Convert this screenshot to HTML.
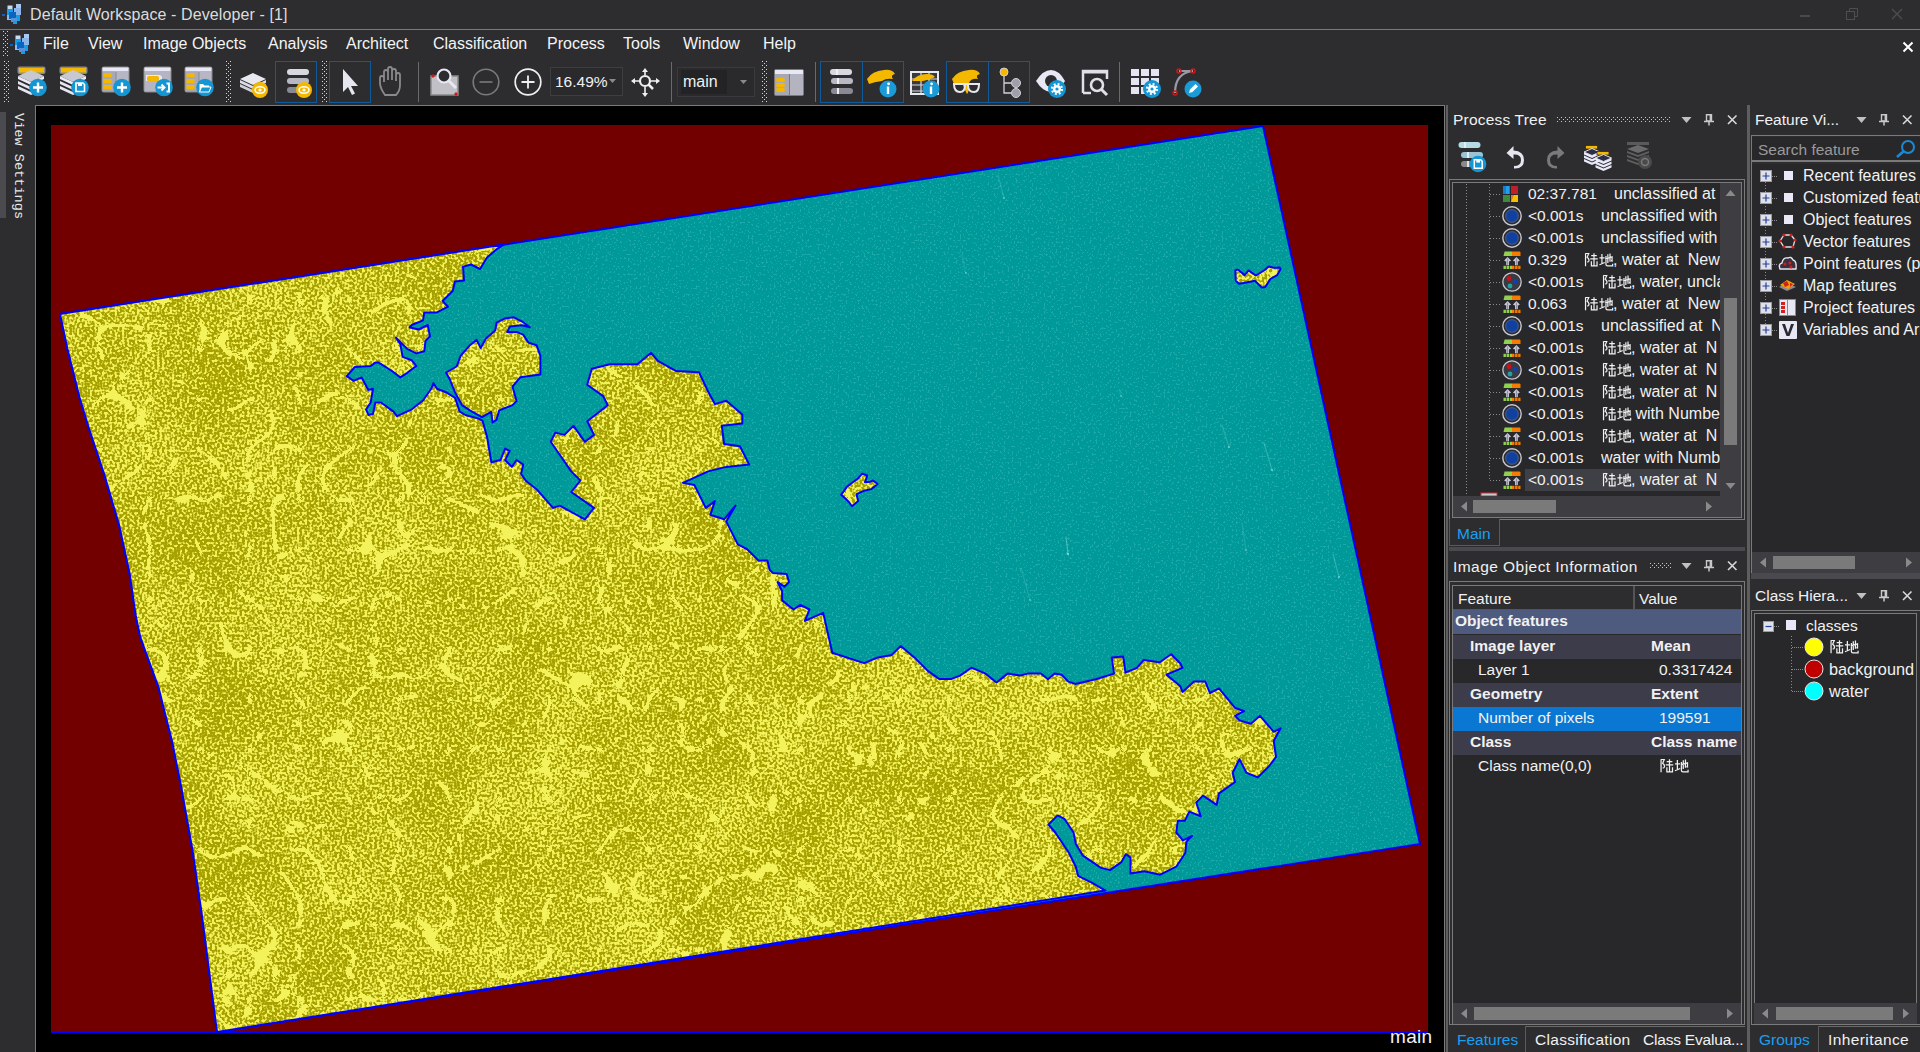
<!DOCTYPE html><html><head><meta charset='utf-8'><style>
*{margin:0;padding:0;box-sizing:border-box}
html,body{width:1920px;height:1052px;overflow:hidden;background:#2d2d30;font-family:"Liberation Sans", sans-serif;color:#f1f1f1;font-size:15px}
.a{position:absolute}
.t{position:absolute;white-space:pre;line-height:1}
.ln{position:absolute;background:#6b6b6b}
.b{font-weight:bold}
</style></head><body>
<svg class='a' style='left:2px;top:3px' width='20' height='22' viewBox='0 0 20 22'><rect x='0' y='11' width='3' height='2' fill='#1060c0'/><rect x='5.5' y='2.5' width='5' height='4' fill='#c8dcf4'/><rect x='14' y='1' width='5' height='4' fill='#a8c8f0'/><rect x='12' y='5' width='7' height='7' fill='#8cb4e8'/><rect x='5' y='6' width='6' height='6' fill='#10a0e8'/><rect x='5' y='12' width='6' height='5' fill='#90b8ec'/><rect x='13' y='12' width='5' height='6' fill='#10a0e8'/><rect x='7' y='9' width='7' height='7' fill='#0a64c0'/><rect x='9' y='15' width='6' height='4' fill='#5a90d8'/><rect x='11' y='18' width='4' height='3' fill='#10a0e8'/></svg>
<div class='t' style='left:30px;top:7px;font-size:16px;color:#dcdcdc;letter-spacing:0.1px'>Default Workspace - Developer - [1]</div>
<div class='ln' style='left:0;top:29px;width:1920px;height:1px;background:#7a7a7a'></div>
<div class='a' style='left:1800px;top:15px;width:10px;height:2px;background:#4a4a4a'></div>
<svg class='a' style='left:1845px;top:7px' width='14' height='14' viewBox='0 0 14 14'><rect x='1.5' y='4.5' width='8' height='8' fill='none' stroke='#4e4e4e'/><path d='M4.5 4.5V1.5H12.5V9.5H9.5' fill='none' stroke='#4e4e4e'/></svg>
<svg class='a' style='left:1890px;top:7px' width='14' height='14' viewBox='0 0 14 14'><path d='M2 2L12 12M12 2L2 12' stroke='#4e4e4e' stroke-width='1.3'/></svg>
<svg class='a' style='left:3px;top:31px' width='5' height='25' viewBox='0 0 5 25'><g fill='#d8d8d8'><rect x='0' y='0' width='1' height='1'/><rect x='4' y='0' width='1' height='1'/><rect x='2' y='2' width='1' height='1'/><rect x='0' y='4' width='1' height='1'/><rect x='4' y='4' width='1' height='1'/><rect x='2' y='6' width='1' height='1'/><rect x='0' y='8' width='1' height='1'/><rect x='4' y='8' width='1' height='1'/><rect x='2' y='10' width='1' height='1'/><rect x='0' y='12' width='1' height='1'/><rect x='4' y='12' width='1' height='1'/><rect x='2' y='14' width='1' height='1'/><rect x='0' y='16' width='1' height='1'/><rect x='4' y='16' width='1' height='1'/><rect x='2' y='18' width='1' height='1'/><rect x='0' y='20' width='1' height='1'/><rect x='4' y='20' width='1' height='1'/><rect x='2' y='22' width='1' height='1'/><rect x='0' y='24' width='1' height='1'/><rect x='4' y='24' width='1' height='1'/></g></svg>
<svg class='a' style='left:10px;top:33px' width='22' height='22' viewBox='0 0 22 22'><rect x='0' y='11' width='3' height='2' fill='#1060c0'/><rect x='5.5' y='2.5' width='5' height='4' fill='#c8dcf4'/><rect x='14' y='1' width='5' height='4' fill='#a8c8f0'/><rect x='12' y='5' width='7' height='7' fill='#8cb4e8'/><rect x='5' y='6' width='6' height='6' fill='#10a0e8'/><rect x='5' y='12' width='6' height='5' fill='#90b8ec'/><rect x='13' y='12' width='5' height='6' fill='#10a0e8'/><rect x='7' y='9' width='7' height='7' fill='#0a64c0'/><rect x='9' y='15' width='6' height='4' fill='#5a90d8'/><rect x='11' y='18' width='4' height='3' fill='#10a0e8'/></svg>
<div class='t' style='left:43px;top:36px;font-size:16px;color:#f4f4f4'>File</div>
<div class='t' style='left:88px;top:36px;font-size:16px;color:#f4f4f4'>View</div>
<div class='t' style='left:143px;top:36px;font-size:16px;color:#f4f4f4'>Image Objects</div>
<div class='t' style='left:268px;top:36px;font-size:16px;color:#f4f4f4'>Analysis</div>
<div class='t' style='left:346px;top:36px;font-size:16px;color:#f4f4f4'>Architect</div>
<div class='t' style='left:433px;top:36px;font-size:16px;color:#f4f4f4'>Classification</div>
<div class='t' style='left:547px;top:36px;font-size:16px;color:#f4f4f4'>Process</div>
<div class='t' style='left:623px;top:36px;font-size:16px;color:#f4f4f4'>Tools</div>
<div class='t' style='left:683px;top:36px;font-size:16px;color:#f4f4f4'>Window</div>
<div class='t' style='left:763px;top:36px;font-size:16px;color:#f4f4f4'>Help</div>
<svg class='a' style='left:1902px;top:41px' width='12' height='12' viewBox='0 0 12 12'><path d='M1.5 1.5L10.5 10.5M10.5 1.5L1.5 10.5' stroke='#fff' stroke-width='2'/></svg>
<svg class='a' style='left:4px;top:61px' width='5' height='41' viewBox='0 0 5 41'><g fill='#d8d8d8'><rect x='0' y='0' width='1' height='1'/><rect x='4' y='0' width='1' height='1'/><rect x='2' y='2' width='1' height='1'/><rect x='0' y='4' width='1' height='1'/><rect x='4' y='4' width='1' height='1'/><rect x='2' y='6' width='1' height='1'/><rect x='0' y='8' width='1' height='1'/><rect x='4' y='8' width='1' height='1'/><rect x='2' y='10' width='1' height='1'/><rect x='0' y='12' width='1' height='1'/><rect x='4' y='12' width='1' height='1'/><rect x='2' y='14' width='1' height='1'/><rect x='0' y='16' width='1' height='1'/><rect x='4' y='16' width='1' height='1'/><rect x='2' y='18' width='1' height='1'/><rect x='0' y='20' width='1' height='1'/><rect x='4' y='20' width='1' height='1'/><rect x='2' y='22' width='1' height='1'/><rect x='0' y='24' width='1' height='1'/><rect x='4' y='24' width='1' height='1'/><rect x='2' y='26' width='1' height='1'/><rect x='0' y='28' width='1' height='1'/><rect x='4' y='28' width='1' height='1'/><rect x='2' y='30' width='1' height='1'/><rect x='0' y='32' width='1' height='1'/><rect x='4' y='32' width='1' height='1'/><rect x='2' y='34' width='1' height='1'/><rect x='0' y='36' width='1' height='1'/><rect x='4' y='36' width='1' height='1'/><rect x='2' y='38' width='1' height='1'/><rect x='0' y='40' width='1' height='1'/><rect x='4' y='40' width='1' height='1'/></g></svg>
<svg class='a' style='left:17px;top:66px' width='32' height='32' viewBox='0 0 32 32'><rect x='0.5' y='0.5' width='28' height='7.5' rx='2' fill='#8a8a8a'/><rect x='2' y='2' width='25' height='4.5' fill='#f5b800'/><path d='M1 20V23L14 29L27 23V20L14 26Z' fill='#e6e6f2'/><path d='M1 15V18L14 24L27 18V15L14 21Z' fill='#e6e6f2'/><path d='M1 10V13L14 19L27 13V10L14 16Z' fill='#ececf6'/><path d='M1 10L14 4L27 10L14 16Z' fill='#c8c8d2'/><circle cx='21' cy='21.5' r='8.8' fill='#1496d4'/><path d='M21 16.5V26.5M16 21.5H26' stroke='#fff' stroke-width='2.4'/></svg>
<svg class='a' style='left:59px;top:66px' width='32' height='32' viewBox='0 0 32 32'><rect x='0.5' y='0.5' width='28' height='7.5' rx='2' fill='#8a8a8a'/><rect x='2' y='2' width='25' height='4.5' fill='#f5b800'/><path d='M1 20V23L14 29L27 23V20L14 26Z' fill='#e6e6f2'/><path d='M1 15V18L14 24L27 18V15L14 21Z' fill='#e6e6f2'/><path d='M1 10V13L14 19L27 13V10L14 16Z' fill='#ececf6'/><path d='M1 10L14 4L27 10L14 16Z' fill='#c8c8d2'/><circle cx='21' cy='21.5' r='8.8' fill='#1496d4'/><path d='M17 17H24L25.5 18.5V25.5H17Z' fill='none' stroke='#fff' stroke-width='1.6'/><rect x='19' y='17' width='4' height='3' fill='#fff'/></svg>
<svg class='a' style='left:101px;top:66px' width='32' height='32' viewBox='0 0 32 32'><rect x='0.5' y='0.5' width='28' height='26' rx='2.5' fill='#8a8a8a'/><rect x='1.5' y='1.5' width='26' height='4' fill='#e8e8f6'/><rect x='1.5' y='5.5' width='13' height='20' fill='#a8a8b6'/><rect x='15.5' y='5.5' width='12' height='20' fill='#b6b6c4'/><rect x='2.5' y='7' width='8' height='4' fill='#f5b800'/><rect x='2.5' y='13' width='8' height='4' fill='#f5b800'/><rect x='2.5' y='19' width='8' height='4' fill='#f5b800'/><circle cx='21' cy='21.5' r='8.8' fill='#1496d4'/><path d='M21 16.5V26.5M16 21.5H26' stroke='#fff' stroke-width='2.4'/></svg>
<svg class='a' style='left:143px;top:66px' width='32' height='32' viewBox='0 0 32 32'><rect x='0.5' y='0.5' width='28' height='26' rx='2.5' fill='#8a8a8a'/><rect x='1.5' y='1.5' width='26' height='4' fill='#e8e8f6'/><rect x='1.5' y='5.5' width='26' height='20' fill='#b4b4c2'/><path d='M3 9H16Q19 9 19 12V15H3Z' fill='#e8e8f6'/><rect x='4' y='10' width='12' height='5' rx='1.5' fill='#f5b800'/><circle cx='21' cy='21.5' r='8.8' fill='#1496d4'/><path d='M14.5 21.5H21M18.5 18.5L21.5 21.5L18.5 24.5M23.5 17.5H26V25.5H23.5' fill='none' stroke='#fff' stroke-width='1.9'/></svg>
<svg class='a' style='left:184px;top:66px' width='32' height='32' viewBox='0 0 32 32'><rect x='0.5' y='0.5' width='28' height='26' rx='2.5' fill='#8a8a8a'/><rect x='1.5' y='1.5' width='26' height='4' fill='#e8e8f6'/><rect x='1.5' y='5.5' width='13' height='20' fill='#a8a8b6'/><rect x='15.5' y='5.5' width='12' height='20' fill='#b6b6c4'/><rect x='2.5' y='7' width='8' height='4' fill='#f5b800'/><rect x='2.5' y='13' width='8' height='4' fill='#f5b800'/><rect x='2.5' y='19' width='8' height='4' fill='#f5b800'/><circle cx='21' cy='21.5' r='8.8' fill='#1496d4'/><path d='M15.5 18H19L20.5 19.5H25V26H15.5Z' fill='#fff'/><path d='M15.5 26L17.5 21H27L25 26Z' fill='#1496d4' stroke='#fff' stroke-width='1'/></svg>
<svg class='a' style='left:226px;top:61px' width='5' height='41' viewBox='0 0 5 41'><g fill='#d8d8d8'><rect x='0' y='0' width='1' height='1'/><rect x='4' y='0' width='1' height='1'/><rect x='2' y='2' width='1' height='1'/><rect x='0' y='4' width='1' height='1'/><rect x='4' y='4' width='1' height='1'/><rect x='2' y='6' width='1' height='1'/><rect x='0' y='8' width='1' height='1'/><rect x='4' y='8' width='1' height='1'/><rect x='2' y='10' width='1' height='1'/><rect x='0' y='12' width='1' height='1'/><rect x='4' y='12' width='1' height='1'/><rect x='2' y='14' width='1' height='1'/><rect x='0' y='16' width='1' height='1'/><rect x='4' y='16' width='1' height='1'/><rect x='2' y='18' width='1' height='1'/><rect x='0' y='20' width='1' height='1'/><rect x='4' y='20' width='1' height='1'/><rect x='2' y='22' width='1' height='1'/><rect x='0' y='24' width='1' height='1'/><rect x='4' y='24' width='1' height='1'/><rect x='2' y='26' width='1' height='1'/><rect x='0' y='28' width='1' height='1'/><rect x='4' y='28' width='1' height='1'/><rect x='2' y='30' width='1' height='1'/><rect x='0' y='32' width='1' height='1'/><rect x='4' y='32' width='1' height='1'/><rect x='2' y='34' width='1' height='1'/><rect x='0' y='36' width='1' height='1'/><rect x='4' y='36' width='1' height='1'/><rect x='2' y='38' width='1' height='1'/><rect x='0' y='40' width='1' height='1'/><rect x='4' y='40' width='1' height='1'/></g></svg>
<svg class='a' style='left:238px;top:67px' width='32' height='34' viewBox='0 0 32 34'><path d='M2 12L15 6L28 12L15 18Z' fill='#e8e8f0'/><path d='M2 16L15 22L28 16V13L15 19L2 13Z' fill='#dcdce6'/><path d='M2 20L15 26L28 20V17L15 23L2 17Z' fill='#cfcfd8'/><circle cx='22' cy='23' r='8' fill='#f5b800'/><ellipse cx='22' cy='23' rx='5' ry='3.2' fill='none' stroke='#fff' stroke-width='1.5'/><circle cx='22' cy='23' r='1.6' fill='#fff'/></svg>
<div class='a' style='left:275px;top:61px;width:42px;height:42px;border:1px solid #0e5a9a'></div>
<svg class='a' style='left:281px;top:67px' width='32' height='34' viewBox='0 0 32 34'><rect x='6' y='2' width='22' height='6' rx='3' fill='#d8d8e0'/><rect x='6' y='11' width='22' height='6' rx='3' fill='#b8b8c4'/><rect x='6' y='20' width='22' height='6' rx='3' fill='#8a8a96'/><circle cx='23' cy='23' r='8' fill='#f5b800'/><ellipse cx='23' cy='23' rx='5' ry='3.2' fill='none' stroke='#fff' stroke-width='1.5'/><circle cx='23' cy='23' r='1.6' fill='#fff'/></svg>
<svg class='a' style='left:322px;top:61px' width='5' height='41' viewBox='0 0 5 41'><g fill='#d8d8d8'><rect x='0' y='0' width='1' height='1'/><rect x='4' y='0' width='1' height='1'/><rect x='2' y='2' width='1' height='1'/><rect x='0' y='4' width='1' height='1'/><rect x='4' y='4' width='1' height='1'/><rect x='2' y='6' width='1' height='1'/><rect x='0' y='8' width='1' height='1'/><rect x='4' y='8' width='1' height='1'/><rect x='2' y='10' width='1' height='1'/><rect x='0' y='12' width='1' height='1'/><rect x='4' y='12' width='1' height='1'/><rect x='2' y='14' width='1' height='1'/><rect x='0' y='16' width='1' height='1'/><rect x='4' y='16' width='1' height='1'/><rect x='2' y='18' width='1' height='1'/><rect x='0' y='20' width='1' height='1'/><rect x='4' y='20' width='1' height='1'/><rect x='2' y='22' width='1' height='1'/><rect x='0' y='24' width='1' height='1'/><rect x='4' y='24' width='1' height='1'/><rect x='2' y='26' width='1' height='1'/><rect x='0' y='28' width='1' height='1'/><rect x='4' y='28' width='1' height='1'/><rect x='2' y='30' width='1' height='1'/><rect x='0' y='32' width='1' height='1'/><rect x='4' y='32' width='1' height='1'/><rect x='2' y='34' width='1' height='1'/><rect x='0' y='36' width='1' height='1'/><rect x='4' y='36' width='1' height='1'/><rect x='2' y='38' width='1' height='1'/><rect x='0' y='40' width='1' height='1'/><rect x='4' y='40' width='1' height='1'/></g></svg>
<div class='a' style='left:329px;top:61px;width:42px;height:42px;border:1px solid #0e5a9a'></div>
<svg class='a' style='left:338px;top:67px' width='24' height='30' viewBox='0 0 24 30'><path d='M5 2V25L10 20L14 28L17 26.5L13 19H20Z' fill='#e6e6f0'/></svg>
<svg class='a' style='left:376px;top:66px' width='30' height='32' viewBox='0 0 30 32'><path d='M9 29Q4 22 4 17V12Q4 10 6 10Q8 10 8 12V16V6Q8 4 10 4Q12 4 12 6V14V3Q12 1 14 1Q16 1 16 3V14V5Q16 3 18 3Q20 3 20 5V15V9Q20 7 22 7Q24 7 24 9V19Q24 25 20 29Z' fill='none' stroke='#8a8a8a' stroke-width='1.8'/></svg>
<div class='a' style='left:418px;top:62px;width:1px;height:40px;background:#6a6a6a'></div>
<svg class='a' style='left:429px;top:67px' width='32' height='30' viewBox='0 0 32 30'><rect x='2' y='9' width='27' height='19' fill='#c0c0c6' stroke='#8a8a8a' stroke-width='1.5'/><circle cx='15' cy='9' r='6.5' fill='#2d2d30' stroke='#e8e8f0' stroke-width='2.2'/><path d='M19.5 13.5L27 21' stroke='#e8e8f0' stroke-width='3'/><path d='M2 9l2-2 2 2-2 2zM25 27l2-2 2 2-2 2z' fill='#d01818'/></svg>
<svg class='a' style='left:471px;top:67px' width='30' height='30' viewBox='0 0 30 30'><circle cx='15' cy='15' r='12.8' fill='none' stroke='#7a7a7a' stroke-width='1.6'/><path d='M8.5 15H21.5' stroke='#7a7a7a' stroke-width='1.6'/></svg>
<svg class='a' style='left:513px;top:67px' width='30' height='30' viewBox='0 0 30 30'><circle cx='15' cy='15' r='12.8' fill='none' stroke='#f0f0f0' stroke-width='1.7'/><path d='M8.5 15H21.5M15 8.5V21.5' stroke='#f0f0f0' stroke-width='1.8'/></svg>
<div class='a' style='left:550px;top:67px;width:73px;height:29px;border:1px solid #3e3e42;background:#2a2a2d'></div>
<div class='t' style='left:555px;top:74px;font-size:15.5px;color:#f1f1f1'>16.49<span style='letter-spacing:-1px'>%</span></div>
<svg class='a' style='left:608px;top:78px' width='9' height='6' viewBox='0 0 9 6'><path d='M1 1H8L4.5 5Z' fill='#8a8a8a'/></svg>
<svg class='a' style='left:630px;top:67px' width='31' height='31' viewBox='0 0 31 31'><circle cx='15' cy='14' r='5' fill='none' stroke='#f0f0f0' stroke-width='2.2'/><path d='M18.5 17.5L23 22' stroke='#f0f0f0' stroke-width='2.5'/><path d='M15 1L12 5H18ZM15 30L12 26H18ZM1 14L5 11V17ZM30 14L26 11V17Z' fill='#f0f0f0'/><path d='M15 4V8M15 20V26M4 14H9M21 14H27' stroke='#f0f0f0' stroke-width='1.6'/></svg>
<div class='a' style='left:671px;top:62px;width:1px;height:40px;background:#6a6a6a'></div>
<div class='a' style='left:677px;top:67px;width:78px;height:30px;border:1px solid #3a3a3e;background:#2a2a2d'></div>
<div class='a' style='left:681px;top:70px;width:46px;height:24px;background:#232325'></div>
<div class='t' style='left:683px;top:74px;font-size:16px;color:#f1f1f1'>main</div>
<svg class='a' style='left:739px;top:79px' width='9' height='6' viewBox='0 0 9 6'><path d='M1 1H8L4.5 5Z' fill='#8a8a8a'/></svg>
<svg class='a' style='left:762px;top:61px' width='5' height='41' viewBox='0 0 5 41'><g fill='#d8d8d8'><rect x='0' y='0' width='1' height='1'/><rect x='4' y='0' width='1' height='1'/><rect x='2' y='2' width='1' height='1'/><rect x='0' y='4' width='1' height='1'/><rect x='4' y='4' width='1' height='1'/><rect x='2' y='6' width='1' height='1'/><rect x='0' y='8' width='1' height='1'/><rect x='4' y='8' width='1' height='1'/><rect x='2' y='10' width='1' height='1'/><rect x='0' y='12' width='1' height='1'/><rect x='4' y='12' width='1' height='1'/><rect x='2' y='14' width='1' height='1'/><rect x='0' y='16' width='1' height='1'/><rect x='4' y='16' width='1' height='1'/><rect x='2' y='18' width='1' height='1'/><rect x='0' y='20' width='1' height='1'/><rect x='4' y='20' width='1' height='1'/><rect x='2' y='22' width='1' height='1'/><rect x='0' y='24' width='1' height='1'/><rect x='4' y='24' width='1' height='1'/><rect x='2' y='26' width='1' height='1'/><rect x='0' y='28' width='1' height='1'/><rect x='4' y='28' width='1' height='1'/><rect x='2' y='30' width='1' height='1'/><rect x='0' y='32' width='1' height='1'/><rect x='4' y='32' width='1' height='1'/><rect x='2' y='34' width='1' height='1'/><rect x='0' y='36' width='1' height='1'/><rect x='4' y='36' width='1' height='1'/><rect x='2' y='38' width='1' height='1'/><rect x='0' y='40' width='1' height='1'/><rect x='4' y='40' width='1' height='1'/></g></svg>
<svg class='a' style='left:773px;top:67px' width='32' height='30' viewBox='0 0 32 30'><rect x='1' y='2' width='30' height='27' rx='2' fill='#7a7a7a'/><rect x='2' y='3' width='28' height='4' fill='#e8e8f4'/><rect x='2' y='7' width='14' height='21' fill='#a8a8b4'/><rect x='17' y='7' width='13' height='21' fill='#b4b4c0'/><rect x='3' y='11' width='9' height='4' rx='2' fill='#f5b800'/><rect x='3' y='16' width='9' height='4' rx='2' fill='#f5b800'/><rect x='3' y='21' width='9' height='4' rx='2' fill='#f5b800'/></svg>
<div class='a' style='left:815px;top:62px;width:1px;height:40px;background:#6a6a6a'></div>
<div class='a' style='left:820px;top:61px;width:84px;height:42px;border:1px solid #0e5a9a'></div><div class='a' style='left:862px;top:61px;width:1px;height:42px;background:#0e5a9a'></div>
<svg class='a' style='left:825px;top:67px' width='30' height='30' viewBox='0 0 30 30'><rect x='5' y='2' width='22' height='6' rx='3' fill='#d8d8e0'/><rect x='6' y='11' width='22' height='6' rx='3' fill='#b8b8c4'/><rect x='6' y='21' width='22' height='6' rx='3' fill='#8a8a96'/><rect x='11' y='2' width='2' height='6' fill='#f0f0f0'/><rect x='12' y='11' width='2' height='6' fill='#f0f0f0'/><rect x='12' y='21' width='2' height='6' fill='#f0f0f0'/></svg>
<svg class='a' style='left:866px;top:67px' width='32' height='32' viewBox='0 0 32 32'><path d='M1 12Q6 4 18 3Q26 2 29 7Q24 8 27 12Q20 11 16 14Q8 15 3 17Z' fill='#f5b800'/><circle cx='22' cy='22' r='8.5' fill='#1a9ad6'/><path d='M22 19.5V27' stroke='#fff' stroke-width='2.4'/><circle cx='22.6' cy='16.8' r='1.4' fill='#fff'/></svg>
<svg class='a' style='left:909px;top:67px' width='32' height='32' viewBox='0 0 32 32'><rect x='1' y='4' width='29' height='24' fill='#e8e8f0'/><rect x='3' y='6' width='25' height='20' fill='#3a3a3e'/><path d='M3 12H28M3 18H28M3 24H28M12 6V26M20 6V26' stroke='#d8d8e0' stroke-width='1.2'/><path d='M3 14Q8 7 18 7Q24 7 26 10Q22 12 14 14Z' fill='#f5b800'/><circle cx='22' cy='22' r='8.5' fill='#1a9ad6'/><path d='M22 19.5V27' stroke='#fff' stroke-width='2.4'/><circle cx='22.6' cy='16.8' r='1.4' fill='#fff'/></svg>
<div class='a' style='left:946px;top:61px;width:84px;height:42px;border:1px solid #0e5a9a'></div><div class='a' style='left:988px;top:61px;width:1px;height:42px;background:#0e5a9a'></div>
<svg class='a' style='left:951px;top:67px' width='32' height='32' viewBox='0 0 32 32'><path d='M1 12Q6 4 18 3Q26 2 29 7Q24 8 27 12Q20 11 18 16Q18 26 16 27Q13 22 12 18Q6 17 3 17Z' fill='#f5b800'/><path d='M2 17H29M3 17Q3 25 9 25Q14 25 14 18M17 18Q17 25 23 25Q28 25 28 17' fill='none' stroke='#e8e8f0' stroke-width='2'/></svg>
<svg class='a' style='left:996px;top:67px' width='28' height='32' viewBox='0 0 28 32'><circle cx='8' cy='5' r='4' fill='#f5b800' stroke='#d0d0d8' stroke-width='1'/><circle cx='20' cy='16' r='4.5' fill='#a0a0aa' stroke='#d0d0d8' stroke-width='1'/><circle cx='20' cy='26' r='4.5' fill='#a0a0aa' stroke='#d0d0d8' stroke-width='1'/><path d='M8 9V26H15.5M8 16H15.5' fill='none' stroke='#d0d0d8' stroke-width='1.3'/></svg>
<svg class='a' style='left:1035px;top:67px' width='32' height='32' viewBox='0 0 32 32'><path d='M1 14Q8 3 16 3Q24 3 30 14Q24 25 16 25Q8 25 1 14Z' fill='#e8e8f4'/><circle cx='16' cy='14' r='6' fill='#2d2d30'/><circle cx='22' cy='22' r='9' fill='#1496d4'/><circle cx='22' cy='22' r='4' fill='#fff'/><circle cx='22' cy='22' r='5' fill='none' stroke='#fff' stroke-width='2.2' stroke-dasharray='1.9 2.03'/><circle cx='22' cy='22' r='1.6' fill='#1496d4'/></svg>
<svg class='a' style='left:1080px;top:67px' width='30' height='30' viewBox='0 0 30 30'><path d='M3 26V4H27V12' fill='none' stroke='#e0e0e8' stroke-width='2.5'/><path d='M3 5H27' stroke='#e0e0e8' stroke-width='3'/><path d='M3 26H11' stroke='#e0e0e8' stroke-width='2.5'/><circle cx='17' cy='18' r='6' fill='none' stroke='#e0e0e8' stroke-width='2.6'/><path d='M21.5 22.5L27 28' stroke='#e0e0e8' stroke-width='3'/></svg>
<div class='a' style='left:1119px;top:62px;width:1px;height:40px;background:#6a6a6a'></div>
<svg class='a' style='left:1130px;top:67px' width='32' height='32' viewBox='0 0 32 32'><g fill='#e4e4f2'><rect x='1' y='2' width='8' height='7'/><rect x='11' y='2' width='8' height='7'/><rect x='21' y='2' width='8' height='7'/><rect x='1' y='11' width='8' height='7'/><rect x='11' y='11' width='8' height='7'/><rect x='21' y='11' width='8' height='7'/><rect x='1' y='20' width='8' height='7'/><rect x='11' y='20' width='8' height='7'/></g><circle cx='22' cy='22' r='9' fill='#1496d4'/><circle cx='22' cy='22' r='4' fill='#fff'/><circle cx='22' cy='22' r='5' fill='none' stroke='#fff' stroke-width='2.2' stroke-dasharray='1.9 2.03'/><circle cx='22' cy='22' r='1.6' fill='#1496d4'/></svg>
<svg class='a' style='left:1171px;top:67px' width='32' height='32' viewBox='0 0 32 32'><path d='M4 26Q4 6 22 4' fill='none' stroke='#9a9aa6' stroke-width='2.2'/><path d='M8 4H22' stroke='#9a9aa6' stroke-width='2'/><g fill='none' stroke='#d01818' stroke-width='1.5'><circle cx='4' cy='26' r='2'/><circle cx='8' cy='4' r='2'/><circle cx='22' cy='4' r='2'/></g><circle cx='22' cy='22' r='8.5' fill='#1a9ad6'/><path d='M18 26L19 22.5L24.5 17L27 19.5L21.5 25Z' fill='#fff'/></svg>
<div class='a' style='left:35px;top:105px;width:1410px;height:947px;background:#000;border-left:1px solid #7a7a7a;border-top:1px solid #7a7a7a;border-right:1px solid #7a7a7a'></div>
<svg class='a' style='left:0;top:0' width='1450' height='1052' viewBox='0 0 1450 1052'><rect x='51' y='125' width='1377' height='907' fill='#720000'/><line x1='51' y1='1032.5' x2='1428' y2='1032.5' stroke='#0000ff' stroke-width='1.3'/><defs><clipPath id='qc'><polygon points='60.0,314.0 1263.0,126.0 1420.0,844.0 217.0,1032.0 202.0,915.8 192.8,852.0 181.4,788.0 172.3,742.5 158.6,687.7 140.4,637.6 135.8,616.3 129.7,573.8 119.1,525.1 103.9,473.4 88.7,427.8 79.5,397.3 67.4,348.7'/></clipPath><filter id='wx' x='0' y='0' width='100%' height='100%' color-interpolation-filters='sRGB'><feTurbulence type='fractalNoise' baseFrequency='0.5' numOctaves='1' seed='21' result='f'/><feColorMatrix in='f' type='matrix' values='0 0 0 0 0  0 0 0 0 0  0 0 0 0 0  14 0 0 0 -8.3' result='m'/><feFlood flood-color='#1ea9a9'/><feComposite in2='m' operator='in'/></filter></defs><polygon points='60.0,314.0 1263.0,126.0 1420.0,844.0 217.0,1032.0 202.0,915.8 192.8,852.0 181.4,788.0 172.3,742.5 158.6,687.7 140.4,637.6 135.8,616.3 129.7,573.8 119.1,525.1 103.9,473.4 88.7,427.8 79.5,397.3 67.4,348.7' fill='#009999'/><rect x='51' y='125' width='1377' height='907' clip-path='url(#qc)' filter='url(#wx)'/><polygon points='60.0,314.0 1263.0,126.0 1420.0,844.0 217.0,1032.0 202.0,915.8 192.8,852.0 181.4,788.0 172.3,742.5 158.6,687.7 140.4,637.6 135.8,616.3 129.7,573.8 119.1,525.1 103.9,473.4 88.7,427.8 79.5,397.3 67.4,348.7' fill='none' stroke='#0000ff' stroke-width='2'/><defs><clipPath id='lc'><polygon points='60.0,314.0 503.7,244.6 496.0,249.7 487.0,257.6 480.0,269.0 471.0,264.5 463.0,266.8 464.0,280.4 455.0,281.6 452.8,290.7 442.6,301.0 448.0,306.7 436.9,312.4 424.3,312.4 423.0,320.4 411.8,325.0 409.5,327.2 418.6,329.5 427.7,325.0 430.0,336.3 425.5,340.9 424.3,351.2 416.3,353.4 407.2,348.9 395.8,337.5 400.4,344.3 402.6,356.9 411.8,360.3 416.3,366.0 407.2,372.8 400.4,377.4 391.2,370.5 378.7,362.6 375.3,362.6 370.7,366.0 354.7,367.1 346.8,376.2 353.6,380.8 361.6,377.4 368.4,389.9 373.0,388.8 370.7,402.5 366.1,409.3 368.4,415.0 373.0,413.9 375.3,402.5 381.0,402.5 393.5,411.6 396.9,416.2 411.8,409.3 423.2,400.2 431.2,388.8 433.4,383.1 436.9,388.8 446.0,392.2 455.1,397.9 459.7,411.6 465.4,415.0 477.9,418.4 482.5,420.7 487.0,436.7 491.4,462.3 500.5,460.0 505.1,448.6 509.7,450.9 505.1,460.0 511.9,466.9 516.5,460.0 523.3,464.6 521.1,473.7 525.6,480.5 537.0,489.7 553.0,507.9 559.8,505.6 580.4,517.0 584.9,519.3 594.0,507.9 571.2,492.0 580.4,480.5 571.2,471.4 550.7,441.8 555.3,432.6 564.4,434.9 573.5,425.8 584.9,441.8 594.0,434.9 587.2,421.2 607.7,405.3 603.2,396.1 587.2,384.7 591.8,368.8 610.0,364.2 637.4,364.2 651.1,352.8 657.9,360.8 676.2,371.1 699.0,372.2 708.1,391.6 714.9,404.1 726.3,400.7 742.3,414.4 742.3,423.5 721.8,425.8 724.1,444.0 740.0,446.3 749.2,464.6 726.3,466.9 708.1,471.4 683.0,482.8 694.4,485.1 705.8,507.9 714.9,501.1 710.4,514.8 724.1,519.3 735.5,505.6 726.3,521.6 737.8,544.4 746.9,549.0 758.3,560.4 767.4,560.4 769.7,570.0 773.0,573.0 786.7,574.1 789.0,582.1 784.4,586.7 777.6,582.1 782.1,591.2 782.1,600.4 793.5,609.5 800.4,604.9 809.5,609.5 804.9,620.9 823.2,612.9 832.3,652.8 864.2,663.1 877.9,657.4 891.6,655.1 900.7,646.0 914.4,657.4 928.1,671.1 939.5,679.1 950.9,679.1 960.0,675.6 971.4,667.7 985.1,673.4 996.5,682.5 1007.9,673.4 1020.0,675.6 1027.4,673.6 1041.0,673.6 1047.9,679.3 1054.7,673.6 1061.6,674.7 1068.4,681.6 1075.3,683.9 1095.8,679.3 1114.0,673.6 1111.8,657.6 1123.2,656.5 1125.5,672.5 1136.9,667.9 1143.7,659.9 1159.7,662.2 1171.1,654.2 1180.2,663.3 1182.5,667.9 1166.5,674.7 1180.2,686.1 1182.5,691.9 1193.9,681.6 1205.3,681.6 1209.9,693.0 1219.0,688.4 1235.0,707.8 1244.1,711.2 1235.0,715.8 1239.5,720.4 1250.9,723.8 1260.0,715.8 1273.7,731.8 1280.6,728.3 1273.7,740.9 1276.0,756.9 1269.2,766.0 1257.8,777.4 1246.4,772.8 1239.5,759.1 1232.7,772.8 1235.0,782.0 1219.0,793.4 1216.7,804.8 1203.0,795.6 1196.2,802.5 1200.7,816.2 1189.3,811.6 1184.8,820.7 1177.9,820.7 1176.2,832.5 1183.0,840.4 1192.1,835.9 1186.4,841.6 1185.3,853.0 1176.2,866.7 1160.2,874.7 1144.2,871.2 1130.5,873.5 1130.5,857.6 1126.0,854.1 1121.4,862.1 1110.0,870.1 1100.9,867.8 1082.6,855.3 1075.8,843.9 1073.5,832.5 1064.4,818.8 1057.6,815.4 1048.4,824.5 1055.3,832.5 1069.0,853.0 1075.8,866.7 1078.1,875.8 1091.8,882.6 1105.5,890.6 217.0,1032.0 202.0,915.8 192.8,852.0 181.4,788.0 172.3,742.5 158.6,687.7 140.4,637.6 135.8,616.3 129.7,573.8 119.1,525.1 103.9,473.4 88.7,427.8 79.5,397.3 67.4,348.7'/><polygon points='446.0,372.5 456.6,366.5 460.6,355.9 469.9,345.2 476.6,339.9 480.6,347.9 485.9,338.6 495.2,330.6 496.5,322.6 504.5,318.6 513.8,317.3 521.8,321.3 529.8,327.3 521.8,325.3 509.8,326.6 507.2,331.9 516.5,331.9 523.1,334.6 528.5,342.6 536.5,345.2 540.4,355.9 540.4,374.5 531.1,375.8 520.5,377.2 512.5,386.5 516.5,401.1 512.5,405.1 499.2,410.4 496.5,419.8 492.5,422.4 491.2,411.8 481.9,417.1 469.9,410.4 461.9,405.1 455.3,393.1 450.0,379.8'/><polygon points='841.1,494.8 847.4,486.2 857.6,478.8 862.2,473.7 867.3,475.4 865.0,482.2 870.2,481.7 873.0,480.5 877.6,484.0 871.3,489.1 863.9,490.8 856.5,494.2 858.2,501.0 851.9,506.2 849.1,502.2 845.1,498.2'/><polygon points='1235.3,270.4 1237.8,269.5 1244.7,275.1 1248.5,270.4 1255.8,275.5 1264.8,270.0 1268.6,266.5 1273.8,267.8 1279.7,267.4 1280.6,269.1 1277.2,275.1 1270.3,279.0 1265.2,287.1 1261.8,287.5 1254.9,280.7 1246.4,282.4 1239.1,283.7 1235.7,280.7'/></clipPath><filter id='tx' x='0' y='0' width='100%' height='100%' color-interpolation-filters='sRGB'><feTurbulence type='fractalNoise' baseFrequency='0.4' numOctaves='1' seed='3' result='f'/><feColorMatrix in='f' type='matrix' values='0 0 0 0 0  0 0 0 0 0  0 0 0 0 0  1 0 0 0 0' result='fa'/><feTurbulence type='fractalNoise' baseFrequency='0.012' numOctaves='2' seed='11' result='z'/><feColorMatrix in='z' type='matrix' values='0 0 0 0 0  0 0 0 0 0  0 0 0 0 0  1 0 0 0 0' result='za'/><feTurbulence type='turbulence' baseFrequency='0.02' numOctaves='2' seed='5' result='t'/><feColorMatrix in='t' type='matrix' values='0 0 0 0 0  0 0 0 0 0  0 0 0 0 0  -14 0 0 0 1.0' result='ta'/><feComposite in='fa' in2='za' operator='arithmetic' k1='0' k2='0.5' k3='0.08' k4='0' result='s1'/><feComposite in='s1' in2='ta' operator='arithmetic' k1='0' k2='1' k3='0.45' k4='0' result='s2'/><feColorMatrix in='s2' type='matrix' values='0 0 0 0 0  0 0 0 0 0  0 0 0 0 0  0 0 0 14 -3.7' result='m'/><feFlood flood-color='#f4f25a'/><feComposite in2='m' operator='in'/></filter></defs><g clip-path='url(#lc)'><rect x='51' y='125' width='1377' height='907' fill='#a6a100'/><rect x='51' y='125' width='1377' height='907' filter='url(#tx)'/></g><g stroke='#bff4f4' stroke-linecap='round'><line x1='998' y1='175' x2='1004' y2='198' stroke-width='1.2' opacity='0.16'/><circle cx='1004' cy='198' r='1.1' fill='#e0ffff' stroke='none' opacity='0.38'/><line x1='1119' y1='389' x2='1121' y2='396' stroke-width='1.2' opacity='0.11'/><circle cx='1121' cy='396' r='1.1' fill='#e0ffff' stroke='none' opacity='0.33'/><line x1='1222' y1='425' x2='1229' y2='447' stroke-width='1.2' opacity='0.20'/><circle cx='1229' cy='447' r='1.1' fill='#e0ffff' stroke='none' opacity='0.43'/><line x1='1264' y1='443' x2='1272' y2='470' stroke-width='1.2' opacity='0.23'/><circle cx='1272' cy='470' r='1.1' fill='#e0ffff' stroke='none' opacity='0.45'/><line x1='1066' y1='537' x2='1068' y2='554' stroke-width='1.2' opacity='0.36'/><circle cx='1068' cy='554' r='1.1' fill='#e0ffff' stroke='none' opacity='0.60'/><line x1='1242' y1='523' x2='1246' y2='550' stroke-width='1.2' opacity='0.14'/><circle cx='1246' cy='550' r='1.1' fill='#e0ffff' stroke='none' opacity='0.35'/><line x1='1333' y1='554' x2='1339' y2='577' stroke-width='1.2' opacity='0.23'/><circle cx='1339' cy='577' r='1.1' fill='#e0ffff' stroke='none' opacity='0.45'/><line x1='1021' y1='568' x2='1030' y2='600' stroke-width='1.2' opacity='0.14'/><circle cx='1030' cy='600' r='1.1' fill='#e0ffff' stroke='none' opacity='0.35'/><line x1='962' y1='255' x2='966' y2='273' stroke-width='1.2' opacity='0.11'/><circle cx='966' cy='273' r='1.1' fill='#e0ffff' stroke='none' opacity='0.33'/></g><polygon points='60.0,314.0 503.7,244.6 496.0,249.7 487.0,257.6 480.0,269.0 471.0,264.5 463.0,266.8 464.0,280.4 455.0,281.6 452.8,290.7 442.6,301.0 448.0,306.7 436.9,312.4 424.3,312.4 423.0,320.4 411.8,325.0 409.5,327.2 418.6,329.5 427.7,325.0 430.0,336.3 425.5,340.9 424.3,351.2 416.3,353.4 407.2,348.9 395.8,337.5 400.4,344.3 402.6,356.9 411.8,360.3 416.3,366.0 407.2,372.8 400.4,377.4 391.2,370.5 378.7,362.6 375.3,362.6 370.7,366.0 354.7,367.1 346.8,376.2 353.6,380.8 361.6,377.4 368.4,389.9 373.0,388.8 370.7,402.5 366.1,409.3 368.4,415.0 373.0,413.9 375.3,402.5 381.0,402.5 393.5,411.6 396.9,416.2 411.8,409.3 423.2,400.2 431.2,388.8 433.4,383.1 436.9,388.8 446.0,392.2 455.1,397.9 459.7,411.6 465.4,415.0 477.9,418.4 482.5,420.7 487.0,436.7 491.4,462.3 500.5,460.0 505.1,448.6 509.7,450.9 505.1,460.0 511.9,466.9 516.5,460.0 523.3,464.6 521.1,473.7 525.6,480.5 537.0,489.7 553.0,507.9 559.8,505.6 580.4,517.0 584.9,519.3 594.0,507.9 571.2,492.0 580.4,480.5 571.2,471.4 550.7,441.8 555.3,432.6 564.4,434.9 573.5,425.8 584.9,441.8 594.0,434.9 587.2,421.2 607.7,405.3 603.2,396.1 587.2,384.7 591.8,368.8 610.0,364.2 637.4,364.2 651.1,352.8 657.9,360.8 676.2,371.1 699.0,372.2 708.1,391.6 714.9,404.1 726.3,400.7 742.3,414.4 742.3,423.5 721.8,425.8 724.1,444.0 740.0,446.3 749.2,464.6 726.3,466.9 708.1,471.4 683.0,482.8 694.4,485.1 705.8,507.9 714.9,501.1 710.4,514.8 724.1,519.3 735.5,505.6 726.3,521.6 737.8,544.4 746.9,549.0 758.3,560.4 767.4,560.4 769.7,570.0 773.0,573.0 786.7,574.1 789.0,582.1 784.4,586.7 777.6,582.1 782.1,591.2 782.1,600.4 793.5,609.5 800.4,604.9 809.5,609.5 804.9,620.9 823.2,612.9 832.3,652.8 864.2,663.1 877.9,657.4 891.6,655.1 900.7,646.0 914.4,657.4 928.1,671.1 939.5,679.1 950.9,679.1 960.0,675.6 971.4,667.7 985.1,673.4 996.5,682.5 1007.9,673.4 1020.0,675.6 1027.4,673.6 1041.0,673.6 1047.9,679.3 1054.7,673.6 1061.6,674.7 1068.4,681.6 1075.3,683.9 1095.8,679.3 1114.0,673.6 1111.8,657.6 1123.2,656.5 1125.5,672.5 1136.9,667.9 1143.7,659.9 1159.7,662.2 1171.1,654.2 1180.2,663.3 1182.5,667.9 1166.5,674.7 1180.2,686.1 1182.5,691.9 1193.9,681.6 1205.3,681.6 1209.9,693.0 1219.0,688.4 1235.0,707.8 1244.1,711.2 1235.0,715.8 1239.5,720.4 1250.9,723.8 1260.0,715.8 1273.7,731.8 1280.6,728.3 1273.7,740.9 1276.0,756.9 1269.2,766.0 1257.8,777.4 1246.4,772.8 1239.5,759.1 1232.7,772.8 1235.0,782.0 1219.0,793.4 1216.7,804.8 1203.0,795.6 1196.2,802.5 1200.7,816.2 1189.3,811.6 1184.8,820.7 1177.9,820.7 1176.2,832.5 1183.0,840.4 1192.1,835.9 1186.4,841.6 1185.3,853.0 1176.2,866.7 1160.2,874.7 1144.2,871.2 1130.5,873.5 1130.5,857.6 1126.0,854.1 1121.4,862.1 1110.0,870.1 1100.9,867.8 1082.6,855.3 1075.8,843.9 1073.5,832.5 1064.4,818.8 1057.6,815.4 1048.4,824.5 1055.3,832.5 1069.0,853.0 1075.8,866.7 1078.1,875.8 1091.8,882.6 1105.5,890.6 217.0,1032.0 202.0,915.8 192.8,852.0 181.4,788.0 172.3,742.5 158.6,687.7 140.4,637.6 135.8,616.3 129.7,573.8 119.1,525.1 103.9,473.4 88.7,427.8 79.5,397.3 67.4,348.7' fill='none' stroke='#0000ff' stroke-width='2' stroke-linejoin='round'/><polygon points='446.0,372.5 456.6,366.5 460.6,355.9 469.9,345.2 476.6,339.9 480.6,347.9 485.9,338.6 495.2,330.6 496.5,322.6 504.5,318.6 513.8,317.3 521.8,321.3 529.8,327.3 521.8,325.3 509.8,326.6 507.2,331.9 516.5,331.9 523.1,334.6 528.5,342.6 536.5,345.2 540.4,355.9 540.4,374.5 531.1,375.8 520.5,377.2 512.5,386.5 516.5,401.1 512.5,405.1 499.2,410.4 496.5,419.8 492.5,422.4 491.2,411.8 481.9,417.1 469.9,410.4 461.9,405.1 455.3,393.1 450.0,379.8' fill='none' stroke='#0000ff' stroke-width='2' stroke-linejoin='round'/><polygon points='841.1,494.8 847.4,486.2 857.6,478.8 862.2,473.7 867.3,475.4 865.0,482.2 870.2,481.7 873.0,480.5 877.6,484.0 871.3,489.1 863.9,490.8 856.5,494.2 858.2,501.0 851.9,506.2 849.1,502.2 845.1,498.2' fill='none' stroke='#0000ff' stroke-width='2' stroke-linejoin='round'/><polygon points='1235.3,270.4 1237.8,269.5 1244.7,275.1 1248.5,270.4 1255.8,275.5 1264.8,270.0 1268.6,266.5 1273.8,267.8 1279.7,267.4 1280.6,269.1 1277.2,275.1 1270.3,279.0 1265.2,287.1 1261.8,287.5 1254.9,280.7 1246.4,282.4 1239.1,283.7 1235.7,280.7' fill='none' stroke='#0000ff' stroke-width='2' stroke-linejoin='round'/></svg>
<div class='t' style='left:1390px;top:1027px;font-size:19px;color:#f4f4f4;letter-spacing:0.3px'>main</div>
<div class='a' style='left:0;top:112px;width:6px;height:106px;background:#4a4a4f'></div>
<div class='t' style='left:11px;top:113px;font-family:"Liberation Mono";font-size:13.6px;color:#e8e8e8;writing-mode:vertical-rl'>View Settings</div>
<div class='a' style='left:1446px;top:105px;width:2px;height:947px;background:#5e5e5e'></div>
<div class='a' style='left:1747px;top:105px;width:3px;height:947px;background:#5e5e5e'></div>
<div class='t' style='left:1453px;top:112px;font-size:15.5px;color:#f1f1f1;letter-spacing:0.2px'>Process Tree</div>
<svg class='a' style='left:1557px;top:117px' width='113' height='5' viewBox='0 0 113 5'><g fill='#c8c8c8'><rect x='0' y='0' width='1' height='1'/><rect x='4' y='0' width='1' height='1'/><rect x='8' y='0' width='1' height='1'/><rect x='12' y='0' width='1' height='1'/><rect x='16' y='0' width='1' height='1'/><rect x='20' y='0' width='1' height='1'/><rect x='24' y='0' width='1' height='1'/><rect x='28' y='0' width='1' height='1'/><rect x='32' y='0' width='1' height='1'/><rect x='36' y='0' width='1' height='1'/><rect x='40' y='0' width='1' height='1'/><rect x='44' y='0' width='1' height='1'/><rect x='48' y='0' width='1' height='1'/><rect x='52' y='0' width='1' height='1'/><rect x='56' y='0' width='1' height='1'/><rect x='60' y='0' width='1' height='1'/><rect x='64' y='0' width='1' height='1'/><rect x='68' y='0' width='1' height='1'/><rect x='72' y='0' width='1' height='1'/><rect x='76' y='0' width='1' height='1'/><rect x='80' y='0' width='1' height='1'/><rect x='84' y='0' width='1' height='1'/><rect x='88' y='0' width='1' height='1'/><rect x='92' y='0' width='1' height='1'/><rect x='96' y='0' width='1' height='1'/><rect x='100' y='0' width='1' height='1'/><rect x='104' y='0' width='1' height='1'/><rect x='108' y='0' width='1' height='1'/><rect x='112' y='0' width='1' height='1'/><rect x='2' y='2' width='1' height='1'/><rect x='6' y='2' width='1' height='1'/><rect x='10' y='2' width='1' height='1'/><rect x='14' y='2' width='1' height='1'/><rect x='18' y='2' width='1' height='1'/><rect x='22' y='2' width='1' height='1'/><rect x='26' y='2' width='1' height='1'/><rect x='30' y='2' width='1' height='1'/><rect x='34' y='2' width='1' height='1'/><rect x='38' y='2' width='1' height='1'/><rect x='42' y='2' width='1' height='1'/><rect x='46' y='2' width='1' height='1'/><rect x='50' y='2' width='1' height='1'/><rect x='54' y='2' width='1' height='1'/><rect x='58' y='2' width='1' height='1'/><rect x='62' y='2' width='1' height='1'/><rect x='66' y='2' width='1' height='1'/><rect x='70' y='2' width='1' height='1'/><rect x='74' y='2' width='1' height='1'/><rect x='78' y='2' width='1' height='1'/><rect x='82' y='2' width='1' height='1'/><rect x='86' y='2' width='1' height='1'/><rect x='90' y='2' width='1' height='1'/><rect x='94' y='2' width='1' height='1'/><rect x='98' y='2' width='1' height='1'/><rect x='102' y='2' width='1' height='1'/><rect x='106' y='2' width='1' height='1'/><rect x='110' y='2' width='1' height='1'/><rect x='0' y='4' width='1' height='1'/><rect x='4' y='4' width='1' height='1'/><rect x='8' y='4' width='1' height='1'/><rect x='12' y='4' width='1' height='1'/><rect x='16' y='4' width='1' height='1'/><rect x='20' y='4' width='1' height='1'/><rect x='24' y='4' width='1' height='1'/><rect x='28' y='4' width='1' height='1'/><rect x='32' y='4' width='1' height='1'/><rect x='36' y='4' width='1' height='1'/><rect x='40' y='4' width='1' height='1'/><rect x='44' y='4' width='1' height='1'/><rect x='48' y='4' width='1' height='1'/><rect x='52' y='4' width='1' height='1'/><rect x='56' y='4' width='1' height='1'/><rect x='60' y='4' width='1' height='1'/><rect x='64' y='4' width='1' height='1'/><rect x='68' y='4' width='1' height='1'/><rect x='72' y='4' width='1' height='1'/><rect x='76' y='4' width='1' height='1'/><rect x='80' y='4' width='1' height='1'/><rect x='84' y='4' width='1' height='1'/><rect x='88' y='4' width='1' height='1'/><rect x='92' y='4' width='1' height='1'/><rect x='96' y='4' width='1' height='1'/><rect x='100' y='4' width='1' height='1'/><rect x='104' y='4' width='1' height='1'/><rect x='108' y='4' width='1' height='1'/><rect x='112' y='4' width='1' height='1'/></g></svg>
<svg class='a' style='left:1681px;top:114px' width='57' height='14' viewBox='0 0 57 14'><path d='M0.5 3H10.5L5.5 9Z' fill='#c0c0c0'/><path d='M25.5 0.8H30.5V7H25.5Z' fill='none' stroke='#c8c8c8' stroke-width='1.4'/><rect x='28.6' y='0.8' width='2' height='6' fill='#c8c8c8'/><path d='M23 7.6H33M28 7.6V11.5' fill='none' stroke='#c8c8c8' stroke-width='1.5'/><path d='M47 1.5L55.5 10M55.5 1.5L47 10' stroke='#d8d8d8' stroke-width='1.6'/></svg>
<svg class='a' style='left:1458px;top:141px' width='32' height='32' viewBox='0 0 32 32'><rect x='0.5' y='1' width='22' height='6' rx='3' fill='#b4dce4'/><rect x='3' y='11' width='22' height='6' rx='3' fill='#9ac4d4'/><rect x='3' y='20' width='12' height='6' rx='3' fill='#8a8a8a'/><rect x='6' y='1' width='2' height='6' fill='#e0f0f4'/><rect x='9' y='11' width='2' height='6' fill='#e0f0f4'/><rect x='9' y='20' width='2' height='6' fill='#e0e0e0'/><circle cx='20' cy='23' r='8.3' fill='#1496d4'/><path d='M16.3 18.8H22.7L24.2 20.3V27.2H16.3Z' fill='none' stroke='#fff' stroke-width='1.5'/><rect x='18.3' y='18.8' width='3.8' height='2.8' fill='#fff'/></svg>
<svg class='a' style='left:1503px;top:141px' width='24' height='28' viewBox='0 0 24 28'><path d='M3.5 12L10.5 5V9.5Q21 10 21 19Q21 28 11 27.5V25Q18 25 18 19Q18 13 10.5 13.5V18Z' fill='#e6e6f2'/></svg>
<svg class='a' style='left:1544px;top:141px' width='24' height='28' viewBox='0 0 24 28'><path d='M20.5 12L13.5 5V9.5Q3 10 3 19Q3 28 13 27.5V25Q6 25 6 19Q6 13 13.5 13.5V18Z' fill='#7a7a7a'/></svg>
<svg class='a' style='left:1582px;top:141px' width='34' height='30' viewBox='0 0 34 30'><g transform='translate(2,4)'><rect x='1.5' y='0.5' width='12' height='3.5' fill='#f5b800' stroke='#2a2a3a' stroke-width='0.8'/><path d='M0 14L8 17.5L16 14V16.5L8 20L0 16.5Z' fill='#e8e8f8'/><path d='M0 10.5L8 14L16 10.5V13L8 16.5L0 13Z' fill='#e8e8f8'/><path d='M0 7L8 10.5L16 7V9.5L8 13L0 9.5Z' fill='#ececfa'/><path d='M0 7L8 3.5L16 7L8 10.5Z' fill='#2e2e48' stroke='#f0f0f8' stroke-width='0.9'/></g><g transform='translate(13.5,10)'><rect x='1.5' y='0.5' width='12' height='3.5' fill='#f5b800' stroke='#2a2a3a' stroke-width='0.8'/><path d='M0 14L8 17.5L16 14V16.5L8 20L0 16.5Z' fill='#e8e8f8'/><path d='M0 10.5L8 14L16 10.5V13L8 16.5L0 13Z' fill='#e8e8f8'/><path d='M0 7L8 10.5L16 7V9.5L8 13L0 9.5Z' fill='#ececfa'/><path d='M0 7L8 3.5L16 7L8 10.5Z' fill='#2e2e48' stroke='#f0f0f8' stroke-width='0.9'/></g></svg>
<svg class='a' style='left:1625px;top:141px' width='34' height='30' viewBox='0 0 34 30'><path d='M2 8L13 4L24 8L13 12Z' fill='#6a6a6a'/><path d='M2 12L13 16L24 12V10L13 14L2 10ZM2 16L13 20L24 16V14L13 18L2 14ZM2 20L13 24L24 20V18L13 22L2 18Z' fill='#5e5e5e'/><rect x='2' y='1' width='22' height='3' fill='#5a5a5a'/><circle cx='20' cy='21' r='7' fill='#4a4a4a'/><circle cx='20' cy='21' r='3.5' fill='none' stroke='#7a7a7a' stroke-width='1.5'/></svg>
<div class='a' style='left:1449px;top:179px;width:296px;height:341px;border:1px solid #7a7a7a'></div>
<div class='a' style='left:1452px;top:182px;width:290px;height:336px;border:1px solid #7a7a7a;background:#28282a'></div>
<div class='a' style='left:1466px;top:184px;width:1px;height:312px;background-image:linear-gradient(#8a8a8a 50%,transparent 50%);background-size:1px 3px'></div>
<div class='a' style='left:1489px;top:184px;width:1px;height:297px;background-image:linear-gradient(#8a8a8a 50%,transparent 50%);background-size:1px 3px'></div>
<div class='a' style='left:1490px;top:194px;width:12px;height:1px;background-image:linear-gradient(90deg,#8a8a8a 50%,transparent 50%);background-size:3px 1px'></div>
<svg class='a' style='left:1502px;top:186px' width='18' height='16' viewBox='0 0 18 16'><rect x='1' y='0' width='7' height='8' fill='#1a7ad0'/><rect x='4' y='0' width='3' height='8' fill='#20a0e8'/><rect x='9' y='0' width='7' height='8' fill='#c01e28'/><rect x='1' y='9' width='7' height='7' fill='#3e8a3c'/><rect x='9' y='9' width='7' height='7' fill='#f5c000'/><path d='M9 16L12 9H9Z' fill='#f07020'/></svg>
<div class='t' style='left:1528px;top:186px;font-size:15.5px;color:#f1f1f1'>02:37.781</div>
<div class='a' style='left:1614px;top:184px;width:106px;height:20px;overflow:hidden'><div class='t' style='left:0;top:2px;font-size:16px;color:#f1f1f1'>unclassified at</div></div>
<div class='a' style='left:1490px;top:216px;width:12px;height:1px;background-image:linear-gradient(90deg,#8a8a8a 50%,transparent 50%);background-size:3px 1px'></div>
<svg class='a' style='left:1502px;top:206px' width='20' height='20' viewBox='0 0 20 20'><circle cx='10' cy='10' r='9.2' fill='#2d2d30' stroke='#c8c8d0' stroke-width='1.4'/><circle cx='10' cy='10' r='6.3' fill='#1040a0' stroke='#5a6a9a' stroke-width='0.8'/></svg>
<div class='t' style='left:1528px;top:208px;font-size:15.5px;color:#f1f1f1'><0.001s</div>
<div class='a' style='left:1601px;top:206px;width:119px;height:20px;overflow:hidden'><div class='t' style='left:0;top:2px;font-size:16px;color:#f1f1f1'>unclassified with</div></div>
<div class='a' style='left:1490px;top:238px;width:12px;height:1px;background-image:linear-gradient(90deg,#8a8a8a 50%,transparent 50%);background-size:3px 1px'></div>
<svg class='a' style='left:1502px;top:228px' width='20' height='20' viewBox='0 0 20 20'><circle cx='10' cy='10' r='9.2' fill='#2d2d30' stroke='#c8c8d0' stroke-width='1.4'/><circle cx='10' cy='10' r='6.3' fill='#1040a0' stroke='#5a6a9a' stroke-width='0.8'/></svg>
<div class='t' style='left:1528px;top:230px;font-size:15.5px;color:#f1f1f1'><0.001s</div>
<div class='a' style='left:1601px;top:228px;width:119px;height:20px;overflow:hidden'><div class='t' style='left:0;top:2px;font-size:16px;color:#f1f1f1'>unclassified with</div></div>
<div class='a' style='left:1490px;top:260px;width:12px;height:1px;background-image:linear-gradient(90deg,#8a8a8a 50%,transparent 50%);background-size:3px 1px'></div>
<svg class='a' style='left:1503px;top:251px' width='18' height='18' viewBox='0 0 18 18'><path d='M0.5 5L1.6 0.5H9V5Z' fill='#92d050'/><path d='M9 0.5H16.6L17.5 1.5V5H9Z' fill='#f57c00'/><path d='M4.6 6L1.2 9.6L2.4 10.6L3.2 10V14.2H6V10L6.8 10.6L8 9.6Z' fill='#c8c8da'/><path d='M13.4 6L10 9.6L11.2 10.6L12 10V14.2H14.8V10L15.6 10.6L16.8 9.6Z' fill='#c8c8da'/><path d='M4.6 7.5V14M13.4 7.5V14' stroke='#8a8a9c' stroke-width='1'/><g fill='#92d050'><rect x='0.5' y='14.8' width='2.4' height='3.2'/><rect x='3.6' y='14.8' width='2.4' height='3.2'/><rect x='6.7' y='14.8' width='2.3' height='3.2'/></g><g fill='#f57c00'><rect x='9' y='14.8' width='2.4' height='3.2'/><rect x='12.1' y='14.8' width='2.4' height='3.2'/><rect x='15.2' y='14.8' width='2.3' height='3.2'/></g></svg>
<div class='t' style='left:1528px;top:252px;font-size:15.5px;color:#f1f1f1'>0.329</div>
<div class='a' style='left:1583px;top:250px;width:137px;height:20px;overflow:hidden'><div class='a' style='left:0;top:0'><svg class='a' style='left:0px;top:2px' width='33' height='17' viewBox='0 0 34.06 18.06'><g fill='none' stroke='#f1f1f1' stroke-width='1.29'><path d='M2.2 1.2V15.2M2.2 1.6H5.6L3.9 5.6Q6.6 7.6 5.6 9.8Q5.1 10.8 3.9 10.4M8.2 3.8H14.2M11.2 1.2V14.6M7.2 7.4H15.2M8.4 9.8V14.8H14.4V9.8'/><path transform='translate(16,0)' d='M1 6.2H6.4M3.6 2V12.4M1 13.6L6.6 11.2M7.2 7.4L14.4 5.2V9.6L13.2 9.2M9.9 2.4V11.6M7.9 4.2V13.4Q7.9 14.8 9.6 14.8H15V12.6M12.2 1.6V10.4'/></g></svg></div><div class='t' style='left:30px;top:2px;font-size:16px;color:#f1f1f1'>, water at  New</div></div>
<div class='a' style='left:1490px;top:282px;width:12px;height:1px;background-image:linear-gradient(90deg,#8a8a8a 50%,transparent 50%);background-size:3px 1px'></div>
<svg class='a' style='left:1502px;top:272px' width='20' height='20' viewBox='0 0 20 20'><circle cx='10' cy='10' r='9.2' fill='#3a3a44' stroke='#c8c8d0' stroke-width='1.3'/><circle cx='7' cy='6.5' r='2.4' fill='#d01010'/><circle cx='13' cy='9.5' r='2.4' fill='#1040b0'/><circle cx='8' cy='14' r='2.4' fill='#20a0a0'/></svg>
<div class='t' style='left:1528px;top:274px;font-size:15.5px;color:#f1f1f1'><0.001s</div>
<div class='a' style='left:1601px;top:272px;width:119px;height:20px;overflow:hidden'><div class='a' style='left:0;top:0'><svg class='a' style='left:0px;top:2px' width='33' height='17' viewBox='0 0 34.06 18.06'><g fill='none' stroke='#f1f1f1' stroke-width='1.29'><path d='M2.2 1.2V15.2M2.2 1.6H5.6L3.9 5.6Q6.6 7.6 5.6 9.8Q5.1 10.8 3.9 10.4M8.2 3.8H14.2M11.2 1.2V14.6M7.2 7.4H15.2M8.4 9.8V14.8H14.4V9.8'/><path transform='translate(16,0)' d='M1 6.2H6.4M3.6 2V12.4M1 13.6L6.6 11.2M7.2 7.4L14.4 5.2V9.6L13.2 9.2M9.9 2.4V11.6M7.9 4.2V13.4Q7.9 14.8 9.6 14.8H15V12.6M12.2 1.6V10.4'/></g></svg></div><div class='t' style='left:30px;top:2px;font-size:16px;color:#f1f1f1'>, water, uncla</div></div>
<div class='a' style='left:1490px;top:304px;width:12px;height:1px;background-image:linear-gradient(90deg,#8a8a8a 50%,transparent 50%);background-size:3px 1px'></div>
<svg class='a' style='left:1503px;top:295px' width='18' height='18' viewBox='0 0 18 18'><path d='M0.5 5L1.6 0.5H9V5Z' fill='#92d050'/><path d='M9 0.5H16.6L17.5 1.5V5H9Z' fill='#f57c00'/><path d='M4.6 6L1.2 9.6L2.4 10.6L3.2 10V14.2H6V10L6.8 10.6L8 9.6Z' fill='#c8c8da'/><path d='M13.4 6L10 9.6L11.2 10.6L12 10V14.2H14.8V10L15.6 10.6L16.8 9.6Z' fill='#c8c8da'/><path d='M4.6 7.5V14M13.4 7.5V14' stroke='#8a8a9c' stroke-width='1'/><g fill='#92d050'><rect x='0.5' y='14.8' width='2.4' height='3.2'/><rect x='3.6' y='14.8' width='2.4' height='3.2'/><rect x='6.7' y='14.8' width='2.3' height='3.2'/></g><g fill='#f57c00'><rect x='9' y='14.8' width='2.4' height='3.2'/><rect x='12.1' y='14.8' width='2.4' height='3.2'/><rect x='15.2' y='14.8' width='2.3' height='3.2'/></g></svg>
<div class='t' style='left:1528px;top:296px;font-size:15.5px;color:#f1f1f1'>0.063</div>
<div class='a' style='left:1583px;top:294px;width:137px;height:20px;overflow:hidden'><div class='a' style='left:0;top:0'><svg class='a' style='left:0px;top:2px' width='33' height='17' viewBox='0 0 34.06 18.06'><g fill='none' stroke='#f1f1f1' stroke-width='1.29'><path d='M2.2 1.2V15.2M2.2 1.6H5.6L3.9 5.6Q6.6 7.6 5.6 9.8Q5.1 10.8 3.9 10.4M8.2 3.8H14.2M11.2 1.2V14.6M7.2 7.4H15.2M8.4 9.8V14.8H14.4V9.8'/><path transform='translate(16,0)' d='M1 6.2H6.4M3.6 2V12.4M1 13.6L6.6 11.2M7.2 7.4L14.4 5.2V9.6L13.2 9.2M9.9 2.4V11.6M7.9 4.2V13.4Q7.9 14.8 9.6 14.8H15V12.6M12.2 1.6V10.4'/></g></svg></div><div class='t' style='left:30px;top:2px;font-size:16px;color:#f1f1f1'>, water at  New</div></div>
<div class='a' style='left:1490px;top:326px;width:12px;height:1px;background-image:linear-gradient(90deg,#8a8a8a 50%,transparent 50%);background-size:3px 1px'></div>
<svg class='a' style='left:1502px;top:316px' width='20' height='20' viewBox='0 0 20 20'><circle cx='10' cy='10' r='9.2' fill='#2d2d30' stroke='#c8c8d0' stroke-width='1.4'/><circle cx='10' cy='10' r='6.3' fill='#1040a0' stroke='#5a6a9a' stroke-width='0.8'/></svg>
<div class='t' style='left:1528px;top:318px;font-size:15.5px;color:#f1f1f1'><0.001s</div>
<div class='a' style='left:1601px;top:316px;width:119px;height:20px;overflow:hidden'><div class='t' style='left:0;top:2px;font-size:16px;color:#f1f1f1'>unclassified at  N</div></div>
<div class='a' style='left:1490px;top:348px;width:12px;height:1px;background-image:linear-gradient(90deg,#8a8a8a 50%,transparent 50%);background-size:3px 1px'></div>
<svg class='a' style='left:1503px;top:339px' width='18' height='18' viewBox='0 0 18 18'><path d='M0.5 5L1.6 0.5H9V5Z' fill='#92d050'/><path d='M9 0.5H16.6L17.5 1.5V5H9Z' fill='#f57c00'/><path d='M4.6 6L1.2 9.6L2.4 10.6L3.2 10V14.2H6V10L6.8 10.6L8 9.6Z' fill='#c8c8da'/><path d='M13.4 6L10 9.6L11.2 10.6L12 10V14.2H14.8V10L15.6 10.6L16.8 9.6Z' fill='#c8c8da'/><path d='M4.6 7.5V14M13.4 7.5V14' stroke='#8a8a9c' stroke-width='1'/><g fill='#92d050'><rect x='0.5' y='14.8' width='2.4' height='3.2'/><rect x='3.6' y='14.8' width='2.4' height='3.2'/><rect x='6.7' y='14.8' width='2.3' height='3.2'/></g><g fill='#f57c00'><rect x='9' y='14.8' width='2.4' height='3.2'/><rect x='12.1' y='14.8' width='2.4' height='3.2'/><rect x='15.2' y='14.8' width='2.3' height='3.2'/></g></svg>
<div class='t' style='left:1528px;top:340px;font-size:15.5px;color:#f1f1f1'><0.001s</div>
<div class='a' style='left:1601px;top:338px;width:119px;height:20px;overflow:hidden'><div class='a' style='left:0;top:0'><svg class='a' style='left:0px;top:2px' width='33' height='17' viewBox='0 0 34.06 18.06'><g fill='none' stroke='#f1f1f1' stroke-width='1.29'><path d='M2.2 1.2V15.2M2.2 1.6H5.6L3.9 5.6Q6.6 7.6 5.6 9.8Q5.1 10.8 3.9 10.4M8.2 3.8H14.2M11.2 1.2V14.6M7.2 7.4H15.2M8.4 9.8V14.8H14.4V9.8'/><path transform='translate(16,0)' d='M1 6.2H6.4M3.6 2V12.4M1 13.6L6.6 11.2M7.2 7.4L14.4 5.2V9.6L13.2 9.2M9.9 2.4V11.6M7.9 4.2V13.4Q7.9 14.8 9.6 14.8H15V12.6M12.2 1.6V10.4'/></g></svg></div><div class='t' style='left:30px;top:2px;font-size:16px;color:#f1f1f1'>, water at  N</div></div>
<div class='a' style='left:1490px;top:370px;width:12px;height:1px;background-image:linear-gradient(90deg,#8a8a8a 50%,transparent 50%);background-size:3px 1px'></div>
<svg class='a' style='left:1502px;top:360px' width='20' height='20' viewBox='0 0 20 20'><circle cx='10' cy='10' r='9.2' fill='#3a3a44' stroke='#c8c8d0' stroke-width='1.3'/><circle cx='7' cy='6.5' r='2.4' fill='#d01010'/><circle cx='13' cy='9.5' r='2.4' fill='#1040b0'/><circle cx='8' cy='14' r='2.4' fill='#20a0a0'/></svg>
<div class='t' style='left:1528px;top:362px;font-size:15.5px;color:#f1f1f1'><0.001s</div>
<div class='a' style='left:1601px;top:360px;width:119px;height:20px;overflow:hidden'><div class='a' style='left:0;top:0'><svg class='a' style='left:0px;top:2px' width='33' height='17' viewBox='0 0 34.06 18.06'><g fill='none' stroke='#f1f1f1' stroke-width='1.29'><path d='M2.2 1.2V15.2M2.2 1.6H5.6L3.9 5.6Q6.6 7.6 5.6 9.8Q5.1 10.8 3.9 10.4M8.2 3.8H14.2M11.2 1.2V14.6M7.2 7.4H15.2M8.4 9.8V14.8H14.4V9.8'/><path transform='translate(16,0)' d='M1 6.2H6.4M3.6 2V12.4M1 13.6L6.6 11.2M7.2 7.4L14.4 5.2V9.6L13.2 9.2M9.9 2.4V11.6M7.9 4.2V13.4Q7.9 14.8 9.6 14.8H15V12.6M12.2 1.6V10.4'/></g></svg></div><div class='t' style='left:30px;top:2px;font-size:16px;color:#f1f1f1'>, water at  N</div></div>
<div class='a' style='left:1490px;top:392px;width:12px;height:1px;background-image:linear-gradient(90deg,#8a8a8a 50%,transparent 50%);background-size:3px 1px'></div>
<svg class='a' style='left:1503px;top:383px' width='18' height='18' viewBox='0 0 18 18'><path d='M0.5 5L1.6 0.5H9V5Z' fill='#92d050'/><path d='M9 0.5H16.6L17.5 1.5V5H9Z' fill='#f57c00'/><path d='M4.6 6L1.2 9.6L2.4 10.6L3.2 10V14.2H6V10L6.8 10.6L8 9.6Z' fill='#c8c8da'/><path d='M13.4 6L10 9.6L11.2 10.6L12 10V14.2H14.8V10L15.6 10.6L16.8 9.6Z' fill='#c8c8da'/><path d='M4.6 7.5V14M13.4 7.5V14' stroke='#8a8a9c' stroke-width='1'/><g fill='#92d050'><rect x='0.5' y='14.8' width='2.4' height='3.2'/><rect x='3.6' y='14.8' width='2.4' height='3.2'/><rect x='6.7' y='14.8' width='2.3' height='3.2'/></g><g fill='#f57c00'><rect x='9' y='14.8' width='2.4' height='3.2'/><rect x='12.1' y='14.8' width='2.4' height='3.2'/><rect x='15.2' y='14.8' width='2.3' height='3.2'/></g></svg>
<div class='t' style='left:1528px;top:384px;font-size:15.5px;color:#f1f1f1'><0.001s</div>
<div class='a' style='left:1601px;top:382px;width:119px;height:20px;overflow:hidden'><div class='a' style='left:0;top:0'><svg class='a' style='left:0px;top:2px' width='33' height='17' viewBox='0 0 34.06 18.06'><g fill='none' stroke='#f1f1f1' stroke-width='1.29'><path d='M2.2 1.2V15.2M2.2 1.6H5.6L3.9 5.6Q6.6 7.6 5.6 9.8Q5.1 10.8 3.9 10.4M8.2 3.8H14.2M11.2 1.2V14.6M7.2 7.4H15.2M8.4 9.8V14.8H14.4V9.8'/><path transform='translate(16,0)' d='M1 6.2H6.4M3.6 2V12.4M1 13.6L6.6 11.2M7.2 7.4L14.4 5.2V9.6L13.2 9.2M9.9 2.4V11.6M7.9 4.2V13.4Q7.9 14.8 9.6 14.8H15V12.6M12.2 1.6V10.4'/></g></svg></div><div class='t' style='left:30px;top:2px;font-size:16px;color:#f1f1f1'>, water at  N</div></div>
<div class='a' style='left:1490px;top:414px;width:12px;height:1px;background-image:linear-gradient(90deg,#8a8a8a 50%,transparent 50%);background-size:3px 1px'></div>
<svg class='a' style='left:1502px;top:404px' width='20' height='20' viewBox='0 0 20 20'><circle cx='10' cy='10' r='9.2' fill='#2d2d30' stroke='#c8c8d0' stroke-width='1.4'/><circle cx='10' cy='10' r='6.3' fill='#1040a0' stroke='#5a6a9a' stroke-width='0.8'/></svg>
<div class='t' style='left:1528px;top:406px;font-size:15.5px;color:#f1f1f1'><0.001s</div>
<div class='a' style='left:1601px;top:404px;width:119px;height:20px;overflow:hidden'><div class='a' style='left:0;top:0'><svg class='a' style='left:0px;top:2px' width='33' height='17' viewBox='0 0 34.06 18.06'><g fill='none' stroke='#f1f1f1' stroke-width='1.29'><path d='M2.2 1.2V15.2M2.2 1.6H5.6L3.9 5.6Q6.6 7.6 5.6 9.8Q5.1 10.8 3.9 10.4M8.2 3.8H14.2M11.2 1.2V14.6M7.2 7.4H15.2M8.4 9.8V14.8H14.4V9.8'/><path transform='translate(16,0)' d='M1 6.2H6.4M3.6 2V12.4M1 13.6L6.6 11.2M7.2 7.4L14.4 5.2V9.6L13.2 9.2M9.9 2.4V11.6M7.9 4.2V13.4Q7.9 14.8 9.6 14.8H15V12.6M12.2 1.6V10.4'/></g></svg></div><div class='t' style='left:30px;top:2px;font-size:16px;color:#f1f1f1'> with Numbe</div></div>
<div class='a' style='left:1490px;top:436px;width:12px;height:1px;background-image:linear-gradient(90deg,#8a8a8a 50%,transparent 50%);background-size:3px 1px'></div>
<svg class='a' style='left:1503px;top:427px' width='18' height='18' viewBox='0 0 18 18'><path d='M0.5 5L1.6 0.5H9V5Z' fill='#92d050'/><path d='M9 0.5H16.6L17.5 1.5V5H9Z' fill='#f57c00'/><path d='M4.6 6L1.2 9.6L2.4 10.6L3.2 10V14.2H6V10L6.8 10.6L8 9.6Z' fill='#c8c8da'/><path d='M13.4 6L10 9.6L11.2 10.6L12 10V14.2H14.8V10L15.6 10.6L16.8 9.6Z' fill='#c8c8da'/><path d='M4.6 7.5V14M13.4 7.5V14' stroke='#8a8a9c' stroke-width='1'/><g fill='#92d050'><rect x='0.5' y='14.8' width='2.4' height='3.2'/><rect x='3.6' y='14.8' width='2.4' height='3.2'/><rect x='6.7' y='14.8' width='2.3' height='3.2'/></g><g fill='#f57c00'><rect x='9' y='14.8' width='2.4' height='3.2'/><rect x='12.1' y='14.8' width='2.4' height='3.2'/><rect x='15.2' y='14.8' width='2.3' height='3.2'/></g></svg>
<div class='t' style='left:1528px;top:428px;font-size:15.5px;color:#f1f1f1'><0.001s</div>
<div class='a' style='left:1601px;top:426px;width:119px;height:20px;overflow:hidden'><div class='a' style='left:0;top:0'><svg class='a' style='left:0px;top:2px' width='33' height='17' viewBox='0 0 34.06 18.06'><g fill='none' stroke='#f1f1f1' stroke-width='1.29'><path d='M2.2 1.2V15.2M2.2 1.6H5.6L3.9 5.6Q6.6 7.6 5.6 9.8Q5.1 10.8 3.9 10.4M8.2 3.8H14.2M11.2 1.2V14.6M7.2 7.4H15.2M8.4 9.8V14.8H14.4V9.8'/><path transform='translate(16,0)' d='M1 6.2H6.4M3.6 2V12.4M1 13.6L6.6 11.2M7.2 7.4L14.4 5.2V9.6L13.2 9.2M9.9 2.4V11.6M7.9 4.2V13.4Q7.9 14.8 9.6 14.8H15V12.6M12.2 1.6V10.4'/></g></svg></div><div class='t' style='left:30px;top:2px;font-size:16px;color:#f1f1f1'>, water at  N</div></div>
<div class='a' style='left:1490px;top:458px;width:12px;height:1px;background-image:linear-gradient(90deg,#8a8a8a 50%,transparent 50%);background-size:3px 1px'></div>
<svg class='a' style='left:1502px;top:448px' width='20' height='20' viewBox='0 0 20 20'><circle cx='10' cy='10' r='9.2' fill='#2d2d30' stroke='#c8c8d0' stroke-width='1.4'/><circle cx='10' cy='10' r='6.3' fill='#1040a0' stroke='#5a6a9a' stroke-width='0.8'/></svg>
<div class='t' style='left:1528px;top:450px;font-size:15.5px;color:#f1f1f1'><0.001s</div>
<div class='a' style='left:1601px;top:448px;width:119px;height:20px;overflow:hidden'><div class='t' style='left:0;top:2px;font-size:16px;color:#f1f1f1'>water with Numb</div></div>
<div class='a' style='left:1525px;top:469px;width:195px;height:22px;background:#3f3f46'></div>
<div class='a' style='left:1490px;top:480px;width:12px;height:1px;background-image:linear-gradient(90deg,#8a8a8a 50%,transparent 50%);background-size:3px 1px'></div>
<svg class='a' style='left:1503px;top:471px' width='18' height='18' viewBox='0 0 18 18'><path d='M0.5 5L1.6 0.5H9V5Z' fill='#92d050'/><path d='M9 0.5H16.6L17.5 1.5V5H9Z' fill='#f57c00'/><path d='M4.6 6L1.2 9.6L2.4 10.6L3.2 10V14.2H6V10L6.8 10.6L8 9.6Z' fill='#c8c8da'/><path d='M13.4 6L10 9.6L11.2 10.6L12 10V14.2H14.8V10L15.6 10.6L16.8 9.6Z' fill='#c8c8da'/><path d='M4.6 7.5V14M13.4 7.5V14' stroke='#8a8a9c' stroke-width='1'/><g fill='#92d050'><rect x='0.5' y='14.8' width='2.4' height='3.2'/><rect x='3.6' y='14.8' width='2.4' height='3.2'/><rect x='6.7' y='14.8' width='2.3' height='3.2'/></g><g fill='#f57c00'><rect x='9' y='14.8' width='2.4' height='3.2'/><rect x='12.1' y='14.8' width='2.4' height='3.2'/><rect x='15.2' y='14.8' width='2.3' height='3.2'/></g></svg>
<div class='t' style='left:1528px;top:472px;font-size:15.5px;color:#f1f1f1'><0.001s</div>
<div class='a' style='left:1601px;top:470px;width:119px;height:20px;overflow:hidden'><div class='a' style='left:0;top:0'><svg class='a' style='left:0px;top:2px' width='33' height='17' viewBox='0 0 34.06 18.06'><g fill='none' stroke='#f1f1f1' stroke-width='1.29'><path d='M2.2 1.2V15.2M2.2 1.6H5.6L3.9 5.6Q6.6 7.6 5.6 9.8Q5.1 10.8 3.9 10.4M8.2 3.8H14.2M11.2 1.2V14.6M7.2 7.4H15.2M8.4 9.8V14.8H14.4V9.8'/><path transform='translate(16,0)' d='M1 6.2H6.4M3.6 2V12.4M1 13.6L6.6 11.2M7.2 7.4L14.4 5.2V9.6L13.2 9.2M9.9 2.4V11.6M7.9 4.2V13.4Q7.9 14.8 9.6 14.8H15V12.6M12.2 1.6V10.4'/></g></svg></div><div class='t' style='left:30px;top:2px;font-size:16px;color:#f1f1f1'>, water at  N</div></div>
<svg class='a' style='left:1480px;top:492px' width='18' height='4' viewBox='0 0 18 4'><rect x='1' y='1' width='16' height='3' fill='#c8c8d0' stroke='#d03030' stroke-width='1'/></svg>
<div class='a' style='left:1720px;top:183px;width:21px;height:313px;background:#3e3e42'></div>
<div class='a' style='left:1724px;top:298px;width:13px;height:147px;background:#7a7a7a'></div>
<svg class='a' style='left:1725px;top:189px' width='11' height='8' viewBox='0 0 11 8'><path d='M0.5 7H10.5L5.5 1Z' fill='#8a8a8a'/></svg>
<svg class='a' style='left:1725px;top:482px' width='11' height='8' viewBox='0 0 11 8'><path d='M0.5 1H10.5L5.5 7Z' fill='#8a8a8a'/></svg>
<div class='a' style='left:1453px;top:496px;width:267px;height:21px;background:#3e3e42'></div><div class='a' style='left:1473px;top:500px;width:83px;height:13px;background:#7a7a7a'></div><svg class='a' style='left:1460px;top:501px' width='8' height='11' viewBox='0 0 8 11'><path d='M7 0.5V10.5L1 5.5Z' fill='#8a8a8a'/></svg><svg class='a' style='left:1705px;top:501px' width='8' height='11' viewBox='0 0 8 11'><path d='M1 0.5V10.5L7 5.5Z' fill='#8a8a8a'/></svg>
<div class='a' style='left:1720px;top:496px;width:21px;height:21px;background:#3e3e42'></div>
<div class='a' style='left:1449px;top:519px;width:51px;height:27px;border:1px solid #5a5a5a;border-top:none;background:#2d2d30'></div>
<div class='t' style='left:1457px;top:526px;font-size:15.5px;color:#18a0f0'>Main</div>
<div class='a' style='left:1449px;top:547px;width:296px;height:4px;background:#4a4a4e'></div>
<div class='t' style='left:1453px;top:559px;font-size:15.5px;color:#f1f1f1;letter-spacing:0.45px'>Image Object Information</div>
<svg class='a' style='left:1650px;top:563px' width='21' height='5' viewBox='0 0 21 5'><g fill='#c8c8c8'><rect x='0' y='0' width='1' height='1'/><rect x='4' y='0' width='1' height='1'/><rect x='8' y='0' width='1' height='1'/><rect x='12' y='0' width='1' height='1'/><rect x='16' y='0' width='1' height='1'/><rect x='20' y='0' width='1' height='1'/><rect x='2' y='2' width='1' height='1'/><rect x='6' y='2' width='1' height='1'/><rect x='10' y='2' width='1' height='1'/><rect x='14' y='2' width='1' height='1'/><rect x='18' y='2' width='1' height='1'/><rect x='0' y='4' width='1' height='1'/><rect x='4' y='4' width='1' height='1'/><rect x='8' y='4' width='1' height='1'/><rect x='12' y='4' width='1' height='1'/><rect x='16' y='4' width='1' height='1'/><rect x='20' y='4' width='1' height='1'/></g></svg>
<svg class='a' style='left:1681px;top:560px' width='57' height='14' viewBox='0 0 57 14'><path d='M0.5 3H10.5L5.5 9Z' fill='#c0c0c0'/><path d='M25.5 0.8H30.5V7H25.5Z' fill='none' stroke='#c8c8c8' stroke-width='1.4'/><rect x='28.6' y='0.8' width='2' height='6' fill='#c8c8c8'/><path d='M23 7.6H33M28 7.6V11.5' fill='none' stroke='#c8c8c8' stroke-width='1.5'/><path d='M47 1.5L55.5 10M55.5 1.5L47 10' stroke='#d8d8d8' stroke-width='1.6'/></svg>
<div class='a' style='left:1449px;top:581px;width:296px;height:444px;border:1px solid #7a7a7a'></div>
<div class='a' style='left:1452px;top:585px;width:290px;height:439px;border:1px solid #7a7a7a;background:#28282a'></div>
<div class='a' style='left:1453px;top:586px;width:288px;height:24px;background:#2d2d30;border-bottom:1px solid #555'></div>
<div class='a' style='left:1633px;top:586px;width:2px;height:24px;background:#555'></div>
<div class='t' style='left:1458px;top:591px;font-size:15.5px;color:#f1f1f1'>Feature</div>
<div class='t' style='left:1639px;top:591px;font-size:15.5px;color:#f1f1f1'>Value</div>
<div class='a' style='left:1453px;top:610px;width:288px;height:24px;background:#4f5b7e'></div>
<div class='t' style='left:1455px;top:613px;font-size:15.5px;font-weight:bold;color:#f1f1f1'>Object features</div>
<div class='a' style='left:1453px;top:635px;width:288px;height:24px;background:#3d3c4a'></div>
<div class='t' style='left:1470px;top:638px;font-size:15.5px;font-weight:bold;color:#f1f1f1'>Image layer</div>
<div class='t' style='left:1651px;top:638px;font-size:15.5px;font-weight:bold;color:#f1f1f1'>Mean</div>
<div class='a' style='left:1453px;top:659px;width:288px;height:24px;background:#28282a'></div>
<div class='t' style='left:1478px;top:662px;font-size:15.5px;font-weight:normal;color:#f1f1f1'>Layer 1</div>
<div class='t' style='left:1659px;top:662px;font-size:15.5px;font-weight:normal;color:#f1f1f1'>0.3317424</div>
<div class='a' style='left:1453px;top:683px;width:288px;height:24px;background:#3d3c4a'></div>
<div class='t' style='left:1470px;top:686px;font-size:15.5px;font-weight:bold;color:#f1f1f1'>Geometry</div>
<div class='t' style='left:1651px;top:686px;font-size:15.5px;font-weight:bold;color:#f1f1f1'>Extent</div>
<div class='a' style='left:1453px;top:707px;width:288px;height:24px;background:#0a78d2'></div>
<div class='t' style='left:1478px;top:710px;font-size:15.5px;font-weight:normal;color:#f1f1f1'>Number of pixels</div>
<div class='t' style='left:1659px;top:710px;font-size:15.5px;font-weight:normal;color:#f1f1f1'>199591</div>
<div class='a' style='left:1453px;top:731px;width:288px;height:24px;background:#3d3c4a'></div>
<div class='t' style='left:1470px;top:734px;font-size:15.5px;font-weight:bold;color:#f1f1f1'>Class</div>
<div class='t' style='left:1651px;top:734px;font-size:15.5px;font-weight:bold;color:#f1f1f1'>Class name</div>
<div class='a' style='left:1453px;top:755px;width:288px;height:24px;background:#28282a'></div>
<div class='t' style='left:1478px;top:758px;font-size:15.5px;font-weight:normal;color:#f1f1f1'>Class name(0,0)</div>
<svg class='a' style='left:1659px;top:758px' width='32' height='17' viewBox='0 0 34.13 18.13'><g fill='none' stroke='#f1f1f1' stroke-width='1.33'><path d='M2.2 1.2V15.2M2.2 1.6H5.6L3.9 5.6Q6.6 7.6 5.6 9.8Q5.1 10.8 3.9 10.4M8.2 3.8H14.2M11.2 1.2V14.6M7.2 7.4H15.2M8.4 9.8V14.8H14.4V9.8'/><path transform='translate(16,0)' d='M1 6.2H6.4M3.6 2V12.4M1 13.6L6.6 11.2M7.2 7.4L14.4 5.2V9.6L13.2 9.2M9.9 2.4V11.6M7.9 4.2V13.4Q7.9 14.8 9.6 14.8H15V12.6M12.2 1.6V10.4'/></g></svg>
<div class='a' style='left:1453px;top:1003px;width:288px;height:21px;background:#3e3e42'></div><div class='a' style='left:1474px;top:1007px;width:216px;height:13px;background:#7a7a7a'></div><svg class='a' style='left:1460px;top:1008px' width='8' height='11' viewBox='0 0 8 11'><path d='M7 0.5V10.5L1 5.5Z' fill='#8a8a8a'/></svg><svg class='a' style='left:1726px;top:1008px' width='8' height='11' viewBox='0 0 8 11'><path d='M1 0.5V10.5L7 5.5Z' fill='#8a8a8a'/></svg>
<div class='a' style='left:1449px;top:1026px;width:77px;height:26px;border-right:1px solid #5a5a5a;background:#2d2d30'></div>
<div class='t' style='left:1457px;top:1032px;font-size:15.5px;color:#18a0f0'>Features</div>
<div class='a' style='left:1526px;top:1026px;width:219px;height:1px;background:#6a6a6a'></div>
<div class='t' style='left:1535px;top:1032px;font-size:15.5px;color:#f1f1f1;letter-spacing:0.3px'>Classification</div>
<div class='t' style='left:1643px;top:1032px;font-size:15.5px;color:#f1f1f1;letter-spacing:-0.2px'>Class Evalua...</div>
<div class='t' style='left:1755px;top:112px;font-size:15.5px;color:#f1f1f1'>Feature Vi...</div>
<svg class='a' style='left:1856px;top:114px' width='57' height='14' viewBox='0 0 57 14'><path d='M0.5 3H10.5L5.5 9Z' fill='#c0c0c0'/><path d='M25.5 0.8H30.5V7H25.5Z' fill='none' stroke='#c8c8c8' stroke-width='1.4'/><rect x='28.6' y='0.8' width='2' height='6' fill='#c8c8c8'/><path d='M23 7.6H33M28 7.6V11.5' fill='none' stroke='#c8c8c8' stroke-width='1.5'/><path d='M47 1.5L55.5 10M55.5 1.5L47 10' stroke='#d8d8d8' stroke-width='1.6'/></svg>
<div class='a' style='left:1751px;top:135px;width:169px;height:440px;border:1px solid #7a7a7a;border-right:none'></div>
<div class='a' style='left:1752px;top:137px;width:168px;height:25px;background:#28282a;border-bottom:2px solid #7a7a7a'></div>
<div class='t' style='left:1758px;top:142px;font-size:15.5px;color:#9a9a9a'>Search feature</div>
<svg class='a' style='left:1895px;top:139px' width='22' height='20' viewBox='0 0 22 20'><circle cx='13' cy='8' r='6' fill='none' stroke='#1a8ad6' stroke-width='2'/><path d='M9 12L2 18' stroke='#1a8ad6' stroke-width='2.6'/></svg>
<div class='a' style='left:1752px;top:164px;width:168px;height:388px;background:#28282a'></div>
<div class='a' style='left:1765px;top:182px;width:1px;height:146px;background-image:linear-gradient(#8a8a8a 50%,transparent 50%);background-size:1px 3px'></div>
<svg class='a' style='left:1760px;top:170px' width='12' height='12' viewBox='0 0 12 12'><rect x='0.5' y='0.5' width='11' height='11' fill='#e0e0e8' stroke='#9a9aa4'/><path d='M2.5 6H9.5M6 2.5V9.5' stroke='#2040a0' stroke-width='1.2'/></svg>
<div class='a' style='left:1772px;top:176px;width:5px;height:1px;background-image:linear-gradient(90deg,#8a8a8a 50%,transparent 50%);background-size:2px 1px'></div>
<svg class='a' style='left:1778px;top:169px' width='20' height='14' viewBox='0 0 20 14'><rect x='6' y='2' width='9' height='9' fill='#e8e8f8'/></svg>
<div class='a' style='left:1803px;top:166px;width:117px;height:20px;overflow:hidden'><div class='t' style='left:0;top:2px;font-size:16px;color:#f1f1f1'>Recent features</div></div>
<svg class='a' style='left:1760px;top:192px' width='12' height='12' viewBox='0 0 12 12'><rect x='0.5' y='0.5' width='11' height='11' fill='#e0e0e8' stroke='#9a9aa4'/><path d='M2.5 6H9.5M6 2.5V9.5' stroke='#2040a0' stroke-width='1.2'/></svg>
<div class='a' style='left:1772px;top:198px;width:5px;height:1px;background-image:linear-gradient(90deg,#8a8a8a 50%,transparent 50%);background-size:2px 1px'></div>
<svg class='a' style='left:1778px;top:191px' width='20' height='14' viewBox='0 0 20 14'><rect x='6' y='2' width='9' height='9' fill='#e8e8f8'/></svg>
<div class='a' style='left:1803px;top:188px;width:117px;height:20px;overflow:hidden'><div class='t' style='left:0;top:2px;font-size:16px;color:#f1f1f1'>Customized features</div></div>
<svg class='a' style='left:1760px;top:214px' width='12' height='12' viewBox='0 0 12 12'><rect x='0.5' y='0.5' width='11' height='11' fill='#e0e0e8' stroke='#9a9aa4'/><path d='M2.5 6H9.5M6 2.5V9.5' stroke='#2040a0' stroke-width='1.2'/></svg>
<div class='a' style='left:1772px;top:220px;width:5px;height:1px;background-image:linear-gradient(90deg,#8a8a8a 50%,transparent 50%);background-size:2px 1px'></div>
<svg class='a' style='left:1778px;top:213px' width='20' height='14' viewBox='0 0 20 14'><rect x='6' y='2' width='9' height='9' fill='#e8e8f8'/></svg>
<div class='a' style='left:1803px;top:210px;width:117px;height:20px;overflow:hidden'><div class='t' style='left:0;top:2px;font-size:16px;color:#f1f1f1'>Object features</div></div>
<svg class='a' style='left:1760px;top:236px' width='12' height='12' viewBox='0 0 12 12'><rect x='0.5' y='0.5' width='11' height='11' fill='#e0e0e8' stroke='#9a9aa4'/><path d='M2.5 6H9.5M6 2.5V9.5' stroke='#2040a0' stroke-width='1.2'/></svg>
<div class='a' style='left:1772px;top:242px;width:5px;height:1px;background-image:linear-gradient(90deg,#8a8a8a 50%,transparent 50%);background-size:2px 1px'></div>
<svg class='a' style='left:1778px;top:233px' width='20' height='19' viewBox='0 0 20 19'><path d='M6 2L13 2L17 7L15 14L6 14L2 8Z' fill='none' stroke='#e0e0e8' stroke-width='1.3'/><g fill='#d02020'><circle cx='6' cy='2' r='1.6'/><circle cx='13' cy='2' r='1.6'/><circle cx='17' cy='7' r='1.6'/><circle cx='15' cy='14' r='1.6'/><circle cx='6' cy='14' r='1.6'/><circle cx='2' cy='8' r='1.6'/></g></svg>
<div class='a' style='left:1803px;top:232px;width:117px;height:20px;overflow:hidden'><div class='t' style='left:0;top:2px;font-size:16px;color:#f1f1f1'>Vector features</div></div>
<svg class='a' style='left:1760px;top:258px' width='12' height='12' viewBox='0 0 12 12'><rect x='0.5' y='0.5' width='11' height='11' fill='#e0e0e8' stroke='#9a9aa4'/><path d='M2.5 6H9.5M6 2.5V9.5' stroke='#2040a0' stroke-width='1.2'/></svg>
<div class='a' style='left:1772px;top:264px;width:5px;height:1px;background-image:linear-gradient(90deg,#8a8a8a 50%,transparent 50%);background-size:2px 1px'></div>
<svg class='a' style='left:1778px;top:255px' width='20' height='19' viewBox='0 0 20 19'><path d='M2 14Q0 9 4 8Q5 2 10 3Q13 1 15 5Q19 6 18 14Z' fill='#3a3040' stroke='#e8e8f0' stroke-width='1.4'/><circle cx='7' cy='9' r='1.5' fill='#d02020'/><circle cx='12' cy='8' r='1.5' fill='#d02020'/><circle cx='13' cy='12' r='1.5' fill='#d02020'/></svg>
<div class='a' style='left:1803px;top:254px;width:117px;height:20px;overflow:hidden'><div class='t' style='left:0;top:2px;font-size:16px;color:#f1f1f1'>Point features (p</div></div>
<svg class='a' style='left:1760px;top:280px' width='12' height='12' viewBox='0 0 12 12'><rect x='0.5' y='0.5' width='11' height='11' fill='#e0e0e8' stroke='#9a9aa4'/><path d='M2.5 6H9.5M6 2.5V9.5' stroke='#2040a0' stroke-width='1.2'/></svg>
<div class='a' style='left:1772px;top:286px;width:5px;height:1px;background-image:linear-gradient(90deg,#8a8a8a 50%,transparent 50%);background-size:2px 1px'></div>
<svg class='a' style='left:1778px;top:277px' width='20' height='19' viewBox='0 0 20 19'><path d='M1 10L9 6L18 10L9 14Z' fill='#8a8a96'/><path d='M2 8L9 3L17 7L10 12Z' fill='#f5a000'/><path d='M5 6L9 4L11 8L7 10ZM12 6L15 7L12 10Z' fill='#d02020'/></svg>
<div class='a' style='left:1803px;top:276px;width:117px;height:20px;overflow:hidden'><div class='t' style='left:0;top:2px;font-size:16px;color:#f1f1f1'>Map features</div></div>
<svg class='a' style='left:1760px;top:302px' width='12' height='12' viewBox='0 0 12 12'><rect x='0.5' y='0.5' width='11' height='11' fill='#e0e0e8' stroke='#9a9aa4'/><path d='M2.5 6H9.5M6 2.5V9.5' stroke='#2040a0' stroke-width='1.2'/></svg>
<div class='a' style='left:1772px;top:308px;width:5px;height:1px;background-image:linear-gradient(90deg,#8a8a8a 50%,transparent 50%);background-size:2px 1px'></div>
<svg class='a' style='left:1778px;top:299px' width='20' height='19' viewBox='0 0 20 19'><rect x='1' y='0' width='17' height='17' fill='#8a8a96'/><rect x='2' y='1' width='7' height='15' fill='#e8e8f4'/><rect x='10' y='1' width='7' height='15' fill='#e8e8f4'/><rect x='3' y='3' width='4' height='3' fill='#d02020'/><rect x='3' y='7' width='4' height='3' fill='#d02020'/><rect x='3' y='11' width='4' height='3' fill='#d02020'/></svg>
<div class='a' style='left:1803px;top:298px;width:117px;height:20px;overflow:hidden'><div class='t' style='left:0;top:2px;font-size:16px;color:#f1f1f1'>Project features</div></div>
<svg class='a' style='left:1760px;top:324px' width='12' height='12' viewBox='0 0 12 12'><rect x='0.5' y='0.5' width='11' height='11' fill='#e0e0e8' stroke='#9a9aa4'/><path d='M2.5 6H9.5M6 2.5V9.5' stroke='#2040a0' stroke-width='1.2'/></svg>
<div class='a' style='left:1772px;top:330px;width:5px;height:1px;background-image:linear-gradient(90deg,#8a8a8a 50%,transparent 50%);background-size:2px 1px'></div>
<svg class='a' style='left:1778px;top:321px' width='20' height='19' viewBox='0 0 20 19'><rect x='1' y='0' width='18' height='18' rx='1' fill='#e8e8f4'/><path d='M4 3L8.5 15H11.5L16 3H13L10 12L7 3Z' fill='#2a2a30'/></svg>
<div class='a' style='left:1803px;top:320px;width:117px;height:20px;overflow:hidden'><div class='t' style='left:0;top:2px;font-size:16px;color:#f1f1f1'>Variables and Arrays</div></div>
<div class='a' style='left:1752px;top:552px;width:168px;height:21px;background:#3e3e42'></div><div class='a' style='left:1773px;top:556px;width:82px;height:13px;background:#7a7a7a'></div><svg class='a' style='left:1759px;top:557px' width='8' height='11' viewBox='0 0 8 11'><path d='M7 0.5V10.5L1 5.5Z' fill='#8a8a8a'/></svg><svg class='a' style='left:1905px;top:557px' width='8' height='11' viewBox='0 0 8 11'><path d='M1 0.5V10.5L7 5.5Z' fill='#8a8a8a'/></svg>
<div class='a' style='left:1751px;top:573px;width:169px;height:6px;background:#4a4a4e'></div>
<div class='t' style='left:1755px;top:588px;font-size:15.5px;color:#f1f1f1'>Class Hiera...</div>
<svg class='a' style='left:1856px;top:590px' width='57' height='14' viewBox='0 0 57 14'><path d='M0.5 3H10.5L5.5 9Z' fill='#c0c0c0'/><path d='M25.5 0.8H30.5V7H25.5Z' fill='none' stroke='#c8c8c8' stroke-width='1.4'/><rect x='28.6' y='0.8' width='2' height='6' fill='#c8c8c8'/><path d='M23 7.6H33M28 7.6V11.5' fill='none' stroke='#c8c8c8' stroke-width='1.5'/><path d='M47 1.5L55.5 10M55.5 1.5L47 10' stroke='#d8d8d8' stroke-width='1.6'/></svg>
<div class='a' style='left:1751px;top:610px;width:169px;height:415px;border:1px solid #7a7a7a;border-right:none'></div>
<div class='a' style='left:1754px;top:613px;width:163px;height:390px;border:1px solid #7a7a7a;border-bottom:none;background:#28282a'></div>
<svg class='a' style='left:1763px;top:621px' width='11' height='11' viewBox='0 0 11 11'><rect x='0.5' y='0.5' width='10' height='10' fill='#e0e0e8' stroke='#9a9aa4'/><path d='M2.5 5.5H8.5' stroke='#2040a0' stroke-width='1.2'/></svg>
<div class='a' style='left:1774px;top:626px;width:6px;height:1px;background-image:linear-gradient(90deg,#8a8a8a 50%,transparent 50%);background-size:2px 1px'></div>
<div class='a' style='left:1786px;top:620px;width:10px;height:10px;background:#e8e8f8'></div>
<div class='t' style='left:1806px;top:618px;font-size:15.5px;color:#f1f1f1'>classes</div>
<div class='a' style='left:1791px;top:636px;width:1px;height:56px;background-image:linear-gradient(#8a8a8a 50%,transparent 50%);background-size:1px 3px'></div>
<div class='a' style='left:1792px;top:647px;width:12px;height:1px;background-image:linear-gradient(90deg,#8a8a8a 50%,transparent 50%);background-size:2px 1px'></div>
<svg class='a' style='left:1804px;top:637px' width='20' height='20' viewBox='0 0 20 20'><circle cx='10' cy='10' r='9' fill='#ffff00' stroke='#e8e8e8' stroke-width='1'/></svg>
<svg class='a' style='left:1829px;top:639px' width='32' height='17' viewBox='0 0 34.13 18.13'><g fill='none' stroke='#f1f1f1' stroke-width='1.33'><path d='M2.2 1.2V15.2M2.2 1.6H5.6L3.9 5.6Q6.6 7.6 5.6 9.8Q5.1 10.8 3.9 10.4M8.2 3.8H14.2M11.2 1.2V14.6M7.2 7.4H15.2M8.4 9.8V14.8H14.4V9.8'/><path transform='translate(16,0)' d='M1 6.2H6.4M3.6 2V12.4M1 13.6L6.6 11.2M7.2 7.4L14.4 5.2V9.6L13.2 9.2M9.9 2.4V11.6M7.9 4.2V13.4Q7.9 14.8 9.6 14.8H15V12.6M12.2 1.6V10.4'/></g></svg>
<div class='a' style='left:1792px;top:669px;width:12px;height:1px;background-image:linear-gradient(90deg,#8a8a8a 50%,transparent 50%);background-size:2px 1px'></div>
<svg class='a' style='left:1804px;top:659px' width='20' height='20' viewBox='0 0 20 20'><circle cx='10' cy='10' r='9' fill='#c00000' stroke='#e8e8e8' stroke-width='1'/></svg>
<div class='t' style='left:1829px;top:661px;font-size:16.3px;color:#f1f1f1'>background</div>
<div class='a' style='left:1792px;top:691px;width:12px;height:1px;background-image:linear-gradient(90deg,#8a8a8a 50%,transparent 50%);background-size:2px 1px'></div>
<svg class='a' style='left:1804px;top:681px' width='20' height='20' viewBox='0 0 20 20'><circle cx='10' cy='10' r='9' fill='#00ffff' stroke='#e8e8e8' stroke-width='1'/></svg>
<div class='t' style='left:1829px;top:683px;font-size:16.3px;color:#f1f1f1'>water</div>
<div class='a' style='left:1754px;top:1003px;width:163px;height:21px;background:#3e3e42'></div><div class='a' style='left:1776px;top:1007px;width:117px;height:13px;background:#7a7a7a'></div><svg class='a' style='left:1761px;top:1008px' width='8' height='11' viewBox='0 0 8 11'><path d='M7 0.5V10.5L1 5.5Z' fill='#8a8a8a'/></svg><svg class='a' style='left:1902px;top:1008px' width='8' height='11' viewBox='0 0 8 11'><path d='M1 0.5V10.5L7 5.5Z' fill='#8a8a8a'/></svg>
<div class='a' style='left:1751px;top:1026px;width:68px;height:26px;border-right:1px solid #5a5a5a;background:#2d2d30'></div>
<div class='t' style='left:1759px;top:1032px;font-size:15.5px;color:#18a0f0'>Groups</div>
<div class='a' style='left:1819px;top:1026px;width:101px;height:1px;background:#6a6a6a'></div>
<div class='t' style='left:1828px;top:1032px;font-size:15.5px;color:#f1f1f1;letter-spacing:0.4px'>Inheritance</div>
</body></html>
